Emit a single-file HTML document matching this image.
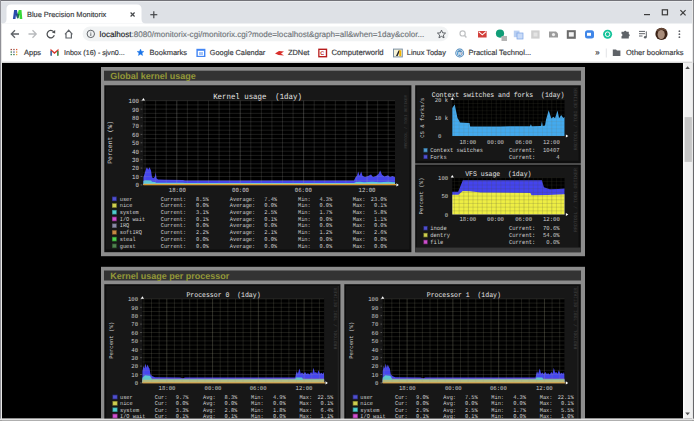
<!DOCTYPE html><html><head><meta charset="utf-8"><title>Blue Precision Monitorix</title>
<style>html,body{margin:0;padding:0;width:694px;height:421px;overflow:hidden;background:#000}svg{display:block}text{text-rendering:geometricPrecision}</style></head><body>
<svg width="694" height="421" viewBox="0 0 694 421">
<rect x="0.00" y="0.00" width="694.00" height="63.00" fill="#ffffff" />
<rect x="0.00" y="0.00" width="694.00" height="23.50" fill="#dee1e6" />
<rect x="0.00" y="0.00" width="694.00" height="1.00" fill="#727278" />
<rect x="0.00" y="1.00" width="694.00" height="0.90" fill="#eaecef" />
<path d="M2,23.5 Q6.5,23.5 6.5,19 L6.5,9 Q6.5,4.5 11,4.5 L137,4.5 Q141.5,4.5 141.5,9 L141.5,19 Q141.5,23.5 146,23.5 Z" fill="#ffffff"/>
<defs><clipPath id="fvl"><rect x="0" y="0" width="17.7" height="30"/></clipPath><clipPath id="fvr"><rect x="17.7" y="0" width="30" height="30"/></clipPath></defs>
<path d="M12.9,18.9 L14.1,10.1 L16.9,10.1 L17.8,13.6 L18.7,10.1 L21.5,10.1 L22.3,18.9 L19.7,18.9 L19.4,14.6 L18.4,18.3 L17.1,18.3 L16.0,14.6 L15.5,18.9 Z" fill="#2a4cae" clip-path="url(#fvl)"/>
<path d="M12.9,18.9 L14.1,10.1 L16.9,10.1 L17.8,13.6 L18.7,10.1 L21.5,10.1 L22.3,18.9 L19.7,18.9 L19.4,14.6 L18.4,18.3 L17.1,18.3 L16.0,14.6 L15.5,18.9 Z" fill="#38d838" clip-path="url(#fvr)"/>
<polygon points="16.2,14.6 17.7,13.4 17.7,18.3 17.1,18.3" fill="#1e3a80"/>
<polygon points="17.7,13.4 19.3,14.6 18.4,18.3 17.7,18.3" fill="#1f7a3a"/>
<text x="27.00" y="17.10" font-size="7.4" fill="#3c4043" stroke="#3c4043" stroke-width="0.18" text-anchor="start" style="font-family:'Liberation Sans',sans-serif;font-weight:normal;white-space:pre" >Blue Precision Monitorix</text>
<line x1="130.60" y1="12.50" x2="134.60" y2="16.50" stroke="#45474a" stroke-width="1.1" />
<line x1="134.60" y1="12.50" x2="130.60" y2="16.50" stroke="#45474a" stroke-width="1.1" />
<line x1="153.80" y1="11.20" x2="153.80" y2="18.20" stroke="#45474a" stroke-width="1.2" />
<line x1="150.30" y1="14.70" x2="157.30" y2="14.70" stroke="#45474a" stroke-width="1.2" />
<line x1="644.00" y1="14.60" x2="650.00" y2="14.60" stroke="#3c3c3c" stroke-width="1.2" />
<rect x="662.3" y="9.8" width="5.2" height="5" fill="none" stroke="#3c3c3c" stroke-width="1.2"/>
<line x1="680.40" y1="10.20" x2="685.60" y2="15.40" stroke="#3c3c3c" stroke-width="1.2" />
<line x1="685.60" y1="10.20" x2="680.40" y2="15.40" stroke="#3c3c3c" stroke-width="1.2" />
<path d="M19,34 L11.5,34 M15,30.3 L11.3,34 L15,37.7" fill="none" stroke="#5f6368" stroke-width="1.3"/>
<path d="M28.5,34 L36,34 M32.5,30.3 L36.2,34 L32.5,37.7" fill="none" stroke="#b8babd" stroke-width="1.3"/>
<path d="M53.6,31.7 A3.7,3.7 0 1 0 54.3,35.3" fill="none" stroke="#4a4d50" stroke-width="1.25"/>
<path d="M51.9,32.6 L55.2,29.9 L55.2,33.4 Z" fill="#4a4d50"/>
<path d="M65,34.3 L68.7,30.2 L72.4,34.3 M66,33.4 L66,38 L71.4,38 L71.4,33.4" fill="none" stroke="#5f6368" stroke-width="1.2"/>
<rect x="82.6" y="26.6" width="366" height="14.6" rx="7.3" fill="#f1f3f4"/>
<circle cx="90.8" cy="33.9" r="3.7" fill="none" stroke="#5f6368" stroke-width="1"/>
<line x1="90.80" y1="33.20" x2="90.80" y2="36.00" stroke="#5f6368" stroke-width="0.9" />
<line x1="90.80" y1="31.80" x2="90.80" y2="32.50" stroke="#5f6368" stroke-width="0.9" />
<text x="99.6" y="36.7" font-size="8.1" stroke-width="0.15" style="font-family:'Liberation Sans',sans-serif"><tspan fill="#202124" stroke="#202124">localhost</tspan><tspan fill="#70757a" stroke="#70757a">:8080/monitorix-cgi/monitorix.cgi?mode=localhost&amp;graph=all&amp;when=1day&amp;color...</tspan></text>
<polygon points="441.50,30.10 442.64,32.83 445.59,33.07 443.34,35.00 444.03,37.88 441.50,36.34 438.97,37.88 439.66,35.00 437.41,33.07 440.36,32.83" fill="none" stroke="#5f6368" stroke-width="1"/>
<circle cx="462.6" cy="33.4" r="2.6" fill="none" stroke="#c0c2c4" stroke-width="1.2"/>
<line x1="464.40" y1="35.30" x2="466.40" y2="37.40" stroke="#c0c2c4" stroke-width="1.4" />
<rect x="478.00" y="31.00" width="8.60" height="6.50" fill="#d23f3a" />
<path d="M478.6,31.6 L482.3,34.8 L486,31.6" fill="none" stroke="#fff" stroke-width="1.1"/>
<circle cx="500" cy="33.6" r="4.1" fill="#109d77"/>
<rect x="501.50" y="36.00" width="5.50" height="5.00" fill="#b4b4b4" />
<rect x="513.80" y="30.60" width="5.70" height="6.60" fill="#b8cff2" />
<rect x="517.00" y="33.00" width="6.00" height="6.00" fill="#c9dbf7" />
<rect x="517" y="33" width="6" height="6" fill="none" stroke="#7aa3e6" stroke-width="0.7"/>
<rect x="531.20" y="30.40" width="8.40" height="8.20" fill="#cfcfcf" />
<rect x="533.50" y="32.50" width="4.00" height="4.00" fill="#e4e4e4" />
<path d="M549,31.5 L556,31.5 L558,33.5 L558,37.5 L549,37.5 Z" fill="#9b9b9b"/>
<circle cx="553.5" cy="34.6" r="1.6" fill="#eee"/>
<rect x="566.80" y="30.20" width="9.00" height="8.60" fill="#6a6a6a" />
<rect x="568.80" y="32.20" width="5.00" height="4.40" fill="#f3f3f3" />
<rect x="585" y="30.2" width="9" height="8.2" rx="2.5" fill="#3f86e8"/>
<rect x="587.00" y="32.80" width="4.00" height="3.00" fill="#fff" />
<circle cx="607.6" cy="34.2" r="4.5" fill="#15c39a"/>
<circle cx="607.6" cy="34.2" r="2.3" fill="none" stroke="#fff" stroke-width="1"/>
<path d="M621.5,31.8 L624,31.8 A1.3,1.3 0 0 1 626.5,31.8 L628.8,31.8 L628.8,34 A1.3,1.3 0 0 1 628.8,36.5 L628.8,38.4 L621.5,38.4 L621.5,36.3 A1.3,1.3 0 0 0 621.5,33.8 Z" fill="#5f6368"/>
<line x1="639.00" y1="31.40" x2="645.00" y2="31.40" stroke="#5f6368" stroke-width="1" />
<line x1="639.00" y1="33.70" x2="645.00" y2="33.70" stroke="#5f6368" stroke-width="1" />
<line x1="639.00" y1="36.00" x2="642.50" y2="36.00" stroke="#5f6368" stroke-width="1" />
<line x1="646.30" y1="31.40" x2="646.30" y2="37.20" stroke="#5f6368" stroke-width="1" />
<circle cx="645.2" cy="37.3" r="1.3" fill="#5f6368"/>
<circle cx="661.5" cy="33.9" r="6.1" fill="#3a2216"/>
<ellipse cx="661.2" cy="34.6" rx="3.6" ry="4.6" fill="#a88c7a"/>
<path d="M656.5,32 Q658,27.8 661.5,27.9 Q665,28 666.5,31 Q663.5,29.6 661,29.8 Q658.5,30 656.5,32 Z" fill="#6a4a38"/>
<circle cx="679.4" cy="31.2" r="0.9" fill="#5f6368"/>
<circle cx="679.4" cy="34.2" r="0.9" fill="#5f6368"/>
<circle cx="679.4" cy="37.2" r="0.9" fill="#5f6368"/>
<rect x="10.60" y="48.90" width="1.30" height="1.30" fill="#9a3a30" />
<rect x="13.30" y="48.90" width="1.30" height="1.30" fill="#8a4a40" />
<rect x="16.00" y="48.90" width="1.30" height="1.30" fill="#e05a3a" />
<rect x="10.60" y="51.40" width="1.30" height="1.30" fill="#2a6a3a" />
<rect x="13.30" y="51.40" width="1.30" height="1.30" fill="#3a4a8a" />
<rect x="16.00" y="51.40" width="1.30" height="1.30" fill="#e0902a" />
<rect x="10.60" y="53.90" width="1.30" height="1.30" fill="#2a7a4a" />
<rect x="13.30" y="53.90" width="1.30" height="1.30" fill="#2a6a3a" />
<rect x="16.00" y="53.90" width="1.30" height="1.30" fill="#e8a030" />
<text x="24.00" y="55.40" font-size="7.5" fill="#3c4043" stroke="#3c4043" stroke-width="0.18" text-anchor="start" style="font-family:'Liberation Sans',sans-serif;font-weight:normal;white-space:pre" >Apps</text>
<path d="M51.2,55.6 L51.2,50.2 L54.5,53 L57.8,50.2 L57.8,55.6" fill="none" stroke="#d8382c" stroke-width="1.4"/>
<line x1="51.20" y1="51.00" x2="51.20" y2="55.80" stroke="#2b7bb9" stroke-width="1.4" />
<line x1="57.80" y1="51.00" x2="57.80" y2="55.80" stroke="#2e9d5a" stroke-width="1.4" />
<text x="64.00" y="55.40" font-size="7.1" fill="#3c4043" stroke="#3c4043" stroke-width="0.18" text-anchor="start" style="font-family:'Liberation Sans',sans-serif;font-weight:normal;white-space:pre" >Inbox (16) - sjvn0...</text>
<polygon points="140.50,49.00 141.45,51.29 143.92,51.49 142.04,53.10 142.62,55.51 140.50,54.22 138.38,55.51 138.96,53.10 137.08,51.49 139.55,51.29" fill="#1a73e8" stroke="#1a73e8" stroke-width="0.4"/>
<text x="149.60" y="55.40" font-size="7.5" fill="#3c4043" stroke="#3c4043" stroke-width="0.18" text-anchor="start" style="font-family:'Liberation Sans',sans-serif;font-weight:normal;white-space:pre" >Bookmarks</text>
<rect x="196.40" y="48.80" width="9.00" height="8.20" fill="#4285f4" />
<rect x="197.80" y="50.80" width="6.20" height="5.00" fill="#ffffff" />
<rect x="199.00" y="52.00" width="4.00" height="3.00" fill="#a6c5f7" />
<text x="209.80" y="55.40" font-size="7.35" fill="#3c4043" stroke="#3c4043" stroke-width="0.18" text-anchor="start" style="font-family:'Liberation Sans',sans-serif;font-weight:normal;white-space:pre" >Google Calendar</text>
<path d="M275,53.5 L279,51 L284,51.5 L281,53.5 L284,55.5 L278.5,55 Z" fill="#d9302c"/>
<text x="288.00" y="55.40" font-size="7.4" fill="#3c4043" stroke="#3c4043" stroke-width="0.18" text-anchor="start" style="font-family:'Liberation Sans',sans-serif;font-weight:normal;white-space:pre" >ZDNet</text>
<rect x="318.20" y="48.60" width="9.00" height="8.80" fill="#b71c1c" />
<rect x="319.50" y="50.00" width="6.30" height="6.00" fill="#ffffff" />
<text x="320.20" y="55.20" font-size="5.5" fill="#b71c1c" text-anchor="start" style="font-family:'Liberation Sans',sans-serif;font-weight:bold;white-space:pre" >C</text>
<text x="331.50" y="55.40" font-size="7.7" fill="#3c4043" stroke="#3c4043" stroke-width="0.18" text-anchor="start" style="font-family:'Liberation Sans',sans-serif;font-weight:normal;white-space:pre" >Computerworld</text>
<rect x="393.00" y="48.60" width="9.80" height="8.80" fill="#7a8fa3" />
<rect x="394.00" y="49.60" width="7.80" height="6.80" fill="#f7f3d8" />
<path d="M398.5,50.5 L396,56 L397.6,56 L400,50.5 Z" fill="#222"/>
<rect x="399.30" y="50.30" width="1.90" height="5.90" fill="#f2b300" />
<text x="406.80" y="55.40" font-size="7.35" fill="#3c4043" stroke="#3c4043" stroke-width="0.18" text-anchor="start" style="font-family:'Liberation Sans',sans-serif;font-weight:normal;white-space:pre" >Linux Today</text>
<circle cx="459.7" cy="53" r="4.4" fill="#3f7fb6"/>
<circle cx="459.7" cy="53" r="3.3" fill="none" stroke="#fff" stroke-width="0.7"/>
<text x="457.60" y="55.20" font-size="4.6" fill="#fff" text-anchor="start" style="font-family:'Liberation Sans',sans-serif;font-weight:bold;white-space:pre" >W</text>
<text x="468.40" y="55.40" font-size="7.5" fill="#3c4043" stroke="#3c4043" stroke-width="0.18" text-anchor="start" style="font-family:'Liberation Sans',sans-serif;font-weight:normal;white-space:pre" >Practical Technol...</text>
<text x="595.20" y="55.30" font-size="8" fill="#3c4043" stroke="#3c4043" stroke-width="0.18" text-anchor="start" style="font-family:'Liberation Sans',sans-serif;font-weight:normal;white-space:pre" >»</text>
<line x1="606.30" y1="48.50" x2="606.30" y2="57.50" stroke="#dadce0" stroke-width="0.8" />
<path d="M612.8,49.4 L616,49.4 L617,50.6 L620.4,50.6 L620.4,56 L612.8,56 Z" fill="#5f6368"/>
<text x="626.00" y="55.40" font-size="7.5" fill="#3c4043" stroke="#3c4043" stroke-width="0.18" text-anchor="start" style="font-family:'Liberation Sans',sans-serif;font-weight:normal;white-space:pre" >Other bookmarks</text>
<rect x="0.00" y="61.60" width="694.00" height="1.40" fill="#d6d6d6" />
<rect x="2.00" y="63.00" width="681.00" height="355.00" fill="#000000" />
<rect x="0.00" y="0.00" width="1.00" height="421.00" fill="#909096" />
<rect x="1.00" y="23.50" width="1.00" height="397.50" fill="#e6e6e6" />
<rect x="692.00" y="0.00" width="1.20" height="421.00" fill="#e8e8e8" />
<rect x="693.20" y="0.00" width="0.80" height="421.00" fill="#76767a" />
<rect x="0.00" y="418.60" width="694.00" height="2.40" fill="#e2e2e2" />
<rect x="0.00" y="420.30" width="694.00" height="0.70" fill="#9a9a9a" />
<rect x="683.00" y="63.00" width="9.00" height="355.60" fill="#f0f0f0" />
<rect x="683.00" y="63.00" width="1.50" height="355.60" fill="#fafafa" />
<rect x="684.6" y="117.1" width="7.3" height="44.8" fill="#c6c6c6"/>
<path d="M685.3,69 L687.6,66.3 L689.9,69 Z" fill="#505050"/>
<path d="M685.3,412.6 L687.6,415.3 L689.9,412.6 Z" fill="#505050"/>
<rect x="101.00" y="67.00" width="484.00" height="189.20" fill="#8c8c8c" />
<rect x="104.00" y="70.70" width="477.00" height="10.00" fill="#333333" />
<text x="110.20" y="79.20" font-size="9" fill="#939838" text-anchor="start" style="font-family:'Liberation Sans',sans-serif;font-weight:bold;white-space:pre" >Global kernel usage</text>
<rect x="101.00" y="266.80" width="484.00" height="163.20" fill="#8c8c8c" />
<rect x="104.00" y="270.50" width="477.00" height="10.00" fill="#333333" />
<text x="110.20" y="279.00" font-size="9" fill="#939838" text-anchor="start" style="font-family:'Liberation Sans',sans-serif;font-weight:bold;white-space:pre" >Kernel usage per processor</text>
<rect x="104.30" y="85.30" width="307.10" height="166.90" fill="#0d0d0d" />
<rect x="105.80" y="86.50" width="303.70" height="163.00" fill="#171717" />
<rect x="415.20" y="85.30" width="165.60" height="77.70" fill="#0d0d0d" />
<rect x="416.60" y="86.50" width="162.00" height="74.30" fill="#171717" />
<rect x="415.20" y="163.00" width="165.60" height="2.20" fill="#4a4a4a" />
<rect x="415.20" y="165.00" width="165.60" height="87.20" fill="#0d0d0d" />
<rect x="416.60" y="166.30" width="162.00" height="81.20" fill="#171717" />
<rect x="415.20" y="247.50" width="165.60" height="4.70" fill="#383838" />
<rect x="104.30" y="284.20" width="236.10" height="145.80" fill="#0d0d0d" />
<rect x="106.20" y="286.00" width="232.60" height="144.00" fill="#171717" />
<rect x="344.30" y="284.20" width="236.50" height="145.80" fill="#0d0d0d" />
<rect x="346.00" y="286.00" width="232.60" height="144.00" fill="#171717" />
<rect x="337.60" y="286.00" width="1.60" height="144.00" fill="#222222" />
<rect x="577.00" y="286.00" width="1.60" height="144.00" fill="#222222" />
<rect x="143.40" y="100.70" width="251.60" height="84.20" fill="#000000" />
<text x="0" y="0" transform="translate(257.50,99.10) scale(1,1.1)" font-size="7.4" fill="#e6e6e6" text-anchor="middle" style="font-family:'Liberation Mono',monospace;font-weight:normal;white-space:pre" >Kernel usage  (1day)</text>
<text x="0" y="0" font-size="6.5" fill="#d0d0d0" text-anchor="middle" style="font-family:'Liberation Mono',monospace;white-space:pre" transform="translate(110.80,142.40) rotate(-90)" dominant-baseline="central">Percent (%)</text>
<text x="0" y="0" transform="translate(139.00,103.10) scale(1,1.1)" font-size="5.8" fill="#d0d0d0" text-anchor="end" style="font-family:'Liberation Mono',monospace;font-weight:normal;white-space:pre" >100</text>
<line x1="140.60" y1="100.70" x2="142.40" y2="100.70" stroke="#6a6a6a" stroke-width="0.8" />
<text x="0" y="0" transform="translate(139.00,111.52) scale(1,1.1)" font-size="5.8" fill="#d0d0d0" text-anchor="end" style="font-family:'Liberation Mono',monospace;font-weight:normal;white-space:pre" >90</text>
<line x1="140.60" y1="109.12" x2="142.40" y2="109.12" stroke="#6a6a6a" stroke-width="0.8" />
<text x="0" y="0" transform="translate(139.00,119.94) scale(1,1.1)" font-size="5.8" fill="#d0d0d0" text-anchor="end" style="font-family:'Liberation Mono',monospace;font-weight:normal;white-space:pre" >80</text>
<line x1="140.60" y1="117.54" x2="142.40" y2="117.54" stroke="#6a6a6a" stroke-width="0.8" />
<text x="0" y="0" transform="translate(139.00,128.36) scale(1,1.1)" font-size="5.8" fill="#d0d0d0" text-anchor="end" style="font-family:'Liberation Mono',monospace;font-weight:normal;white-space:pre" >70</text>
<line x1="140.60" y1="125.96" x2="142.40" y2="125.96" stroke="#6a6a6a" stroke-width="0.8" />
<text x="0" y="0" transform="translate(139.00,136.78) scale(1,1.1)" font-size="5.8" fill="#d0d0d0" text-anchor="end" style="font-family:'Liberation Mono',monospace;font-weight:normal;white-space:pre" >60</text>
<line x1="140.60" y1="134.38" x2="142.40" y2="134.38" stroke="#6a6a6a" stroke-width="0.8" />
<text x="0" y="0" transform="translate(139.00,145.20) scale(1,1.1)" font-size="5.8" fill="#d0d0d0" text-anchor="end" style="font-family:'Liberation Mono',monospace;font-weight:normal;white-space:pre" >50</text>
<line x1="140.60" y1="142.80" x2="142.40" y2="142.80" stroke="#6a6a6a" stroke-width="0.8" />
<text x="0" y="0" transform="translate(139.00,153.62) scale(1,1.1)" font-size="5.8" fill="#d0d0d0" text-anchor="end" style="font-family:'Liberation Mono',monospace;font-weight:normal;white-space:pre" >40</text>
<line x1="140.60" y1="151.22" x2="142.40" y2="151.22" stroke="#6a6a6a" stroke-width="0.8" />
<text x="0" y="0" transform="translate(139.00,162.04) scale(1,1.1)" font-size="5.8" fill="#d0d0d0" text-anchor="end" style="font-family:'Liberation Mono',monospace;font-weight:normal;white-space:pre" >30</text>
<line x1="140.60" y1="159.64" x2="142.40" y2="159.64" stroke="#6a6a6a" stroke-width="0.8" />
<text x="0" y="0" transform="translate(139.00,170.46) scale(1,1.1)" font-size="5.8" fill="#d0d0d0" text-anchor="end" style="font-family:'Liberation Mono',monospace;font-weight:normal;white-space:pre" >20</text>
<line x1="140.60" y1="168.06" x2="142.40" y2="168.06" stroke="#6a6a6a" stroke-width="0.8" />
<text x="0" y="0" transform="translate(139.00,178.88) scale(1,1.1)" font-size="5.8" fill="#d0d0d0" text-anchor="end" style="font-family:'Liberation Mono',monospace;font-weight:normal;white-space:pre" >10</text>
<line x1="140.60" y1="176.48" x2="142.40" y2="176.48" stroke="#6a6a6a" stroke-width="0.8" />
<text x="0" y="0" transform="translate(139.00,187.30) scale(1,1.1)" font-size="5.8" fill="#d0d0d0" text-anchor="end" style="font-family:'Liberation Mono',monospace;font-weight:normal;white-space:pre" >0</text>
<line x1="140.60" y1="184.90" x2="142.40" y2="184.90" stroke="#6a6a6a" stroke-width="0.8" />
<polygon points="143.40,177.32 144.50,173.95 146.00,168.90 147.00,167.22 148.20,169.74 149.50,167.22 151.00,170.59 152.00,177.32 153.50,178.16 155.00,176.48 155.70,172.27 156.50,178.16 158.00,179.43 165.00,179.85 183.00,180.02 185.00,180.52 354.00,180.52 355.50,177.32 357.00,175.64 358.20,171.43 359.50,175.64 361.20,171.43 362.50,175.64 365.00,176.90 368.00,176.06 371.00,174.38 373.00,176.90 376.00,176.06 378.50,173.95 380.20,170.59 382.00,174.80 384.50,176.48 388.00,175.13 390.00,176.90 392.50,176.06 395.00,177.32 395.00,184.90 143.40,184.90" fill="#4646ee" />
<polygon points="143.40,181.11 145.00,180.27 151.00,180.52 152.00,181.87 155.00,182.04 156.00,182.71 183.00,182.71 185.00,182.88 354.00,182.88 356.00,182.04 360.00,181.70 364.00,182.37 372.00,181.87 380.00,182.21 388.00,181.87 395.00,182.21 395.00,184.90 143.40,184.90" fill="#5cc8d8" />
<polygon points="143.40,183.55 395.00,183.55 395.00,184.90 143.40,184.90" fill="#a8c8a8" />
<line x1="143.40" y1="100.70" x2="395.00" y2="100.70" stroke="rgba(165,165,160,0.2)" stroke-width="0.9" />
<line x1="143.40" y1="104.91" x2="395.00" y2="104.91" stroke="rgba(165,165,160,0.2)" stroke-width="0.9" />
<line x1="143.40" y1="109.12" x2="395.00" y2="109.12" stroke="rgba(165,165,160,0.2)" stroke-width="0.9" />
<line x1="143.40" y1="113.33" x2="395.00" y2="113.33" stroke="rgba(165,165,160,0.2)" stroke-width="0.9" />
<line x1="143.40" y1="117.54" x2="395.00" y2="117.54" stroke="rgba(165,165,160,0.2)" stroke-width="0.9" />
<line x1="143.40" y1="121.75" x2="395.00" y2="121.75" stroke="rgba(165,165,160,0.2)" stroke-width="0.9" />
<line x1="143.40" y1="125.96" x2="395.00" y2="125.96" stroke="rgba(165,165,160,0.2)" stroke-width="0.9" />
<line x1="143.40" y1="130.17" x2="395.00" y2="130.17" stroke="rgba(165,165,160,0.2)" stroke-width="0.9" />
<line x1="143.40" y1="134.38" x2="395.00" y2="134.38" stroke="rgba(165,165,160,0.2)" stroke-width="0.9" />
<line x1="143.40" y1="138.59" x2="395.00" y2="138.59" stroke="rgba(165,165,160,0.2)" stroke-width="0.9" />
<line x1="143.40" y1="142.80" x2="395.00" y2="142.80" stroke="rgba(165,165,160,0.2)" stroke-width="0.9" />
<line x1="143.40" y1="147.01" x2="395.00" y2="147.01" stroke="rgba(165,165,160,0.2)" stroke-width="0.9" />
<line x1="143.40" y1="151.22" x2="395.00" y2="151.22" stroke="rgba(165,165,160,0.2)" stroke-width="0.9" />
<line x1="143.40" y1="155.43" x2="395.00" y2="155.43" stroke="rgba(165,165,160,0.2)" stroke-width="0.9" />
<line x1="143.40" y1="159.64" x2="395.00" y2="159.64" stroke="rgba(165,165,160,0.2)" stroke-width="0.9" />
<line x1="143.40" y1="163.85" x2="395.00" y2="163.85" stroke="rgba(165,165,160,0.2)" stroke-width="0.9" />
<line x1="143.40" y1="168.06" x2="395.00" y2="168.06" stroke="rgba(165,165,160,0.2)" stroke-width="0.9" />
<line x1="143.40" y1="172.27" x2="395.00" y2="172.27" stroke="rgba(165,165,160,0.2)" stroke-width="0.9" />
<line x1="143.40" y1="176.48" x2="395.00" y2="176.48" stroke="rgba(165,165,160,0.2)" stroke-width="0.9" />
<line x1="143.40" y1="180.69" x2="395.00" y2="180.69" stroke="rgba(165,165,160,0.2)" stroke-width="0.9" />
<line x1="143.40" y1="184.90" x2="395.00" y2="184.90" stroke="rgba(165,165,160,0.2)" stroke-width="0.9" />
<line x1="145.09" y1="100.70" x2="145.09" y2="184.90" stroke="rgba(165,165,160,0.2)" stroke-width="0.9" />
<line x1="155.66" y1="100.70" x2="155.66" y2="184.90" stroke="rgba(165,165,160,0.2)" stroke-width="0.9" />
<line x1="166.23" y1="100.70" x2="166.23" y2="184.90" stroke="rgba(165,165,160,0.2)" stroke-width="0.9" />
<line x1="176.80" y1="100.70" x2="176.80" y2="184.90" stroke="rgba(165,165,160,0.34)" stroke-width="0.9" />
<line x1="187.37" y1="100.70" x2="187.37" y2="184.90" stroke="rgba(165,165,160,0.2)" stroke-width="0.9" />
<line x1="197.94" y1="100.70" x2="197.94" y2="184.90" stroke="rgba(165,165,160,0.2)" stroke-width="0.9" />
<line x1="208.51" y1="100.70" x2="208.51" y2="184.90" stroke="rgba(165,165,160,0.2)" stroke-width="0.9" />
<line x1="219.08" y1="100.70" x2="219.08" y2="184.90" stroke="rgba(165,165,160,0.2)" stroke-width="0.9" />
<line x1="229.65" y1="100.70" x2="229.65" y2="184.90" stroke="rgba(165,165,160,0.2)" stroke-width="0.9" />
<line x1="240.22" y1="100.70" x2="240.22" y2="184.90" stroke="rgba(165,165,160,0.34)" stroke-width="0.9" />
<line x1="250.79" y1="100.70" x2="250.79" y2="184.90" stroke="rgba(165,165,160,0.2)" stroke-width="0.9" />
<line x1="261.36" y1="100.70" x2="261.36" y2="184.90" stroke="rgba(165,165,160,0.2)" stroke-width="0.9" />
<line x1="271.93" y1="100.70" x2="271.93" y2="184.90" stroke="rgba(165,165,160,0.2)" stroke-width="0.9" />
<line x1="282.50" y1="100.70" x2="282.50" y2="184.90" stroke="rgba(165,165,160,0.2)" stroke-width="0.9" />
<line x1="293.07" y1="100.70" x2="293.07" y2="184.90" stroke="rgba(165,165,160,0.2)" stroke-width="0.9" />
<line x1="303.64" y1="100.70" x2="303.64" y2="184.90" stroke="rgba(165,165,160,0.34)" stroke-width="0.9" />
<line x1="314.21" y1="100.70" x2="314.21" y2="184.90" stroke="rgba(165,165,160,0.2)" stroke-width="0.9" />
<line x1="324.78" y1="100.70" x2="324.78" y2="184.90" stroke="rgba(165,165,160,0.2)" stroke-width="0.9" />
<line x1="335.35" y1="100.70" x2="335.35" y2="184.90" stroke="rgba(165,165,160,0.2)" stroke-width="0.9" />
<line x1="345.92" y1="100.70" x2="345.92" y2="184.90" stroke="rgba(165,165,160,0.2)" stroke-width="0.9" />
<line x1="356.49" y1="100.70" x2="356.49" y2="184.90" stroke="rgba(165,165,160,0.2)" stroke-width="0.9" />
<line x1="367.06" y1="100.70" x2="367.06" y2="184.90" stroke="rgba(165,165,160,0.34)" stroke-width="0.9" />
<line x1="377.63" y1="100.70" x2="377.63" y2="184.90" stroke="rgba(165,165,160,0.2)" stroke-width="0.9" />
<line x1="388.20" y1="100.70" x2="388.20" y2="184.90" stroke="rgba(165,165,160,0.2)" stroke-width="0.9" />
<line x1="143.40" y1="184.60" x2="396.00" y2="184.60" stroke="#dc9c34" stroke-width="1.3" />
<path d="M141.80,100.50 L143.40,98.10 L145.00,100.50 Z" fill="#ffffff"/>
<path d="M396.40,183.30 L398.80,184.90 L396.40,186.50 Z" fill="#ffffff"/>
<text x="0" y="0" transform="translate(177.30,192.10) scale(1,1.1)" font-size="5.7" fill="#d0d0d0" text-anchor="middle" style="font-family:'Liberation Mono',monospace;font-weight:normal;white-space:pre" >18:00</text>
<text x="0" y="0" transform="translate(240.50,192.10) scale(1,1.1)" font-size="5.7" fill="#d0d0d0" text-anchor="middle" style="font-family:'Liberation Mono',monospace;font-weight:normal;white-space:pre" >00:00</text>
<text x="0" y="0" transform="translate(303.30,192.10) scale(1,1.1)" font-size="5.7" fill="#d0d0d0" text-anchor="middle" style="font-family:'Liberation Mono',monospace;font-weight:normal;white-space:pre" >06:00</text>
<text x="0" y="0" transform="translate(367.00,192.10) scale(1,1.1)" font-size="5.7" fill="#d0d0d0" text-anchor="middle" style="font-family:'Liberation Mono',monospace;font-weight:normal;white-space:pre" >12:00</text>
<text x="0" y="0" font-size="4.0681818181818175" fill="#3e3e3e" text-anchor="middle" style="font-family:'Liberation Mono',monospace;white-space:pre" transform="translate(406.50,121.85) rotate(-90)" dominant-baseline="central">RRDTOOL / TOBI OETIKER</text>
<rect x="112.00" y="196.50" width="4.80" height="4.60" fill="#2c2c81" />
<rect x="112.70" y="197.20" width="3.40" height="3.20" fill="#5050ce" />
<text x="0" y="0" transform="translate(119.70,200.60) scale(1,1.1)" font-size="5.3" fill="#d0d0d0" text-anchor="start" style="font-family:'Liberation Mono',monospace;font-weight:normal;white-space:pre" >user</text>
<text x="0" y="0" transform="translate(160.70,200.60) scale(1,1.1)" font-size="5.3" fill="#d0d0d0" text-anchor="start" style="font-family:'Liberation Mono',monospace;font-weight:normal;white-space:pre" >Current:</text>
<text x="0" y="0" transform="translate(208.80,200.60) scale(1,1.1)" font-size="5.3" fill="#d0d0d0" text-anchor="end" style="font-family:'Liberation Mono',monospace;font-weight:normal;white-space:pre" >8.5%</text>
<text x="0" y="0" transform="translate(229.80,200.60) scale(1,1.1)" font-size="5.3" fill="#d0d0d0" text-anchor="start" style="font-family:'Liberation Mono',monospace;font-weight:normal;white-space:pre" >Average:</text>
<text x="0" y="0" transform="translate(277.00,200.60) scale(1,1.1)" font-size="5.3" fill="#d0d0d0" text-anchor="end" style="font-family:'Liberation Mono',monospace;font-weight:normal;white-space:pre" >7.4%</text>
<text x="0" y="0" transform="translate(298.00,200.60) scale(1,1.1)" font-size="5.3" fill="#d0d0d0" text-anchor="start" style="font-family:'Liberation Mono',monospace;font-weight:normal;white-space:pre" >Min:</text>
<text x="0" y="0" transform="translate(332.10,200.60) scale(1,1.1)" font-size="5.3" fill="#d0d0d0" text-anchor="end" style="font-family:'Liberation Mono',monospace;font-weight:normal;white-space:pre" >4.3%</text>
<text x="0" y="0" transform="translate(352.70,200.60) scale(1,1.1)" font-size="5.3" fill="#d0d0d0" text-anchor="start" style="font-family:'Liberation Mono',monospace;font-weight:normal;white-space:pre" >Max:</text>
<text x="0" y="0" transform="translate(386.70,200.60) scale(1,1.1)" font-size="5.3" fill="#d0d0d0" text-anchor="end" style="font-family:'Liberation Mono',monospace;font-weight:normal;white-space:pre" >23.0%</text>
<rect x="112.00" y="203.22" width="4.80" height="4.60" fill="#81812c" />
<rect x="112.70" y="203.92" width="3.40" height="3.20" fill="#cece50" />
<text x="0" y="0" transform="translate(119.70,207.32) scale(1,1.1)" font-size="5.3" fill="#d0d0d0" text-anchor="start" style="font-family:'Liberation Mono',monospace;font-weight:normal;white-space:pre" >nice</text>
<text x="0" y="0" transform="translate(160.70,207.32) scale(1,1.1)" font-size="5.3" fill="#d0d0d0" text-anchor="start" style="font-family:'Liberation Mono',monospace;font-weight:normal;white-space:pre" >Current:</text>
<text x="0" y="0" transform="translate(208.80,207.32) scale(1,1.1)" font-size="5.3" fill="#d0d0d0" text-anchor="end" style="font-family:'Liberation Mono',monospace;font-weight:normal;white-space:pre" >0.0%</text>
<text x="0" y="0" transform="translate(229.80,207.32) scale(1,1.1)" font-size="5.3" fill="#d0d0d0" text-anchor="start" style="font-family:'Liberation Mono',monospace;font-weight:normal;white-space:pre" >Average:</text>
<text x="0" y="0" transform="translate(277.00,207.32) scale(1,1.1)" font-size="5.3" fill="#d0d0d0" text-anchor="end" style="font-family:'Liberation Mono',monospace;font-weight:normal;white-space:pre" >0.0%</text>
<text x="0" y="0" transform="translate(298.00,207.32) scale(1,1.1)" font-size="5.3" fill="#d0d0d0" text-anchor="start" style="font-family:'Liberation Mono',monospace;font-weight:normal;white-space:pre" >Min:</text>
<text x="0" y="0" transform="translate(332.10,207.32) scale(1,1.1)" font-size="5.3" fill="#d0d0d0" text-anchor="end" style="font-family:'Liberation Mono',monospace;font-weight:normal;white-space:pre" >0.0%</text>
<text x="0" y="0" transform="translate(352.70,207.32) scale(1,1.1)" font-size="5.3" fill="#d0d0d0" text-anchor="start" style="font-family:'Liberation Mono',monospace;font-weight:normal;white-space:pre" >Max:</text>
<text x="0" y="0" transform="translate(386.70,207.32) scale(1,1.1)" font-size="5.3" fill="#d0d0d0" text-anchor="end" style="font-family:'Liberation Mono',monospace;font-weight:normal;white-space:pre" >0.1%</text>
<rect x="112.00" y="209.94" width="4.80" height="4.60" fill="#2c8181" />
<rect x="112.70" y="210.64" width="3.40" height="3.20" fill="#50cece" />
<text x="0" y="0" transform="translate(119.70,214.04) scale(1,1.1)" font-size="5.3" fill="#d0d0d0" text-anchor="start" style="font-family:'Liberation Mono',monospace;font-weight:normal;white-space:pre" >system</text>
<text x="0" y="0" transform="translate(160.70,214.04) scale(1,1.1)" font-size="5.3" fill="#d0d0d0" text-anchor="start" style="font-family:'Liberation Mono',monospace;font-weight:normal;white-space:pre" >Current:</text>
<text x="0" y="0" transform="translate(208.80,214.04) scale(1,1.1)" font-size="5.3" fill="#d0d0d0" text-anchor="end" style="font-family:'Liberation Mono',monospace;font-weight:normal;white-space:pre" >3.1%</text>
<text x="0" y="0" transform="translate(229.80,214.04) scale(1,1.1)" font-size="5.3" fill="#d0d0d0" text-anchor="start" style="font-family:'Liberation Mono',monospace;font-weight:normal;white-space:pre" >Average:</text>
<text x="0" y="0" transform="translate(277.00,214.04) scale(1,1.1)" font-size="5.3" fill="#d0d0d0" text-anchor="end" style="font-family:'Liberation Mono',monospace;font-weight:normal;white-space:pre" >2.5%</text>
<text x="0" y="0" transform="translate(298.00,214.04) scale(1,1.1)" font-size="5.3" fill="#d0d0d0" text-anchor="start" style="font-family:'Liberation Mono',monospace;font-weight:normal;white-space:pre" >Min:</text>
<text x="0" y="0" transform="translate(332.10,214.04) scale(1,1.1)" font-size="5.3" fill="#d0d0d0" text-anchor="end" style="font-family:'Liberation Mono',monospace;font-weight:normal;white-space:pre" >1.7%</text>
<text x="0" y="0" transform="translate(352.70,214.04) scale(1,1.1)" font-size="5.3" fill="#d0d0d0" text-anchor="start" style="font-family:'Liberation Mono',monospace;font-weight:normal;white-space:pre" >Max:</text>
<text x="0" y="0" transform="translate(386.70,214.04) scale(1,1.1)" font-size="5.3" fill="#d0d0d0" text-anchor="end" style="font-family:'Liberation Mono',monospace;font-weight:normal;white-space:pre" >5.8%</text>
<rect x="112.00" y="216.66" width="4.80" height="4.60" fill="#812c81" />
<rect x="112.70" y="217.36" width="3.40" height="3.20" fill="#ce50ce" />
<text x="0" y="0" transform="translate(119.70,220.76) scale(1,1.1)" font-size="5.3" fill="#d0d0d0" text-anchor="start" style="font-family:'Liberation Mono',monospace;font-weight:normal;white-space:pre" >I/O wait</text>
<text x="0" y="0" transform="translate(160.70,220.76) scale(1,1.1)" font-size="5.3" fill="#d0d0d0" text-anchor="start" style="font-family:'Liberation Mono',monospace;font-weight:normal;white-space:pre" >Current:</text>
<text x="0" y="0" transform="translate(208.80,220.76) scale(1,1.1)" font-size="5.3" fill="#d0d0d0" text-anchor="end" style="font-family:'Liberation Mono',monospace;font-weight:normal;white-space:pre" >0.1%</text>
<text x="0" y="0" transform="translate(229.80,220.76) scale(1,1.1)" font-size="5.3" fill="#d0d0d0" text-anchor="start" style="font-family:'Liberation Mono',monospace;font-weight:normal;white-space:pre" >Average:</text>
<text x="0" y="0" transform="translate(277.00,220.76) scale(1,1.1)" font-size="5.3" fill="#d0d0d0" text-anchor="end" style="font-family:'Liberation Mono',monospace;font-weight:normal;white-space:pre" >0.1%</text>
<text x="0" y="0" transform="translate(298.00,220.76) scale(1,1.1)" font-size="5.3" fill="#d0d0d0" text-anchor="start" style="font-family:'Liberation Mono',monospace;font-weight:normal;white-space:pre" >Min:</text>
<text x="0" y="0" transform="translate(332.10,220.76) scale(1,1.1)" font-size="5.3" fill="#d0d0d0" text-anchor="end" style="font-family:'Liberation Mono',monospace;font-weight:normal;white-space:pre" >0.0%</text>
<text x="0" y="0" transform="translate(352.70,220.76) scale(1,1.1)" font-size="5.3" fill="#d0d0d0" text-anchor="start" style="font-family:'Liberation Mono',monospace;font-weight:normal;white-space:pre" >Max:</text>
<text x="0" y="0" transform="translate(386.70,220.76) scale(1,1.1)" font-size="5.3" fill="#d0d0d0" text-anchor="end" style="font-family:'Liberation Mono',monospace;font-weight:normal;white-space:pre" >1.1%</text>
<rect x="112.00" y="223.38" width="4.80" height="4.60" fill="#545466" />
<rect x="112.70" y="224.08" width="3.40" height="3.20" fill="#8b8ba6" />
<text x="0" y="0" transform="translate(119.70,227.48) scale(1,1.1)" font-size="5.3" fill="#d0d0d0" text-anchor="start" style="font-family:'Liberation Mono',monospace;font-weight:normal;white-space:pre" >IRQ</text>
<text x="0" y="0" transform="translate(160.70,227.48) scale(1,1.1)" font-size="5.3" fill="#d0d0d0" text-anchor="start" style="font-family:'Liberation Mono',monospace;font-weight:normal;white-space:pre" >Current:</text>
<text x="0" y="0" transform="translate(208.80,227.48) scale(1,1.1)" font-size="5.3" fill="#d0d0d0" text-anchor="end" style="font-family:'Liberation Mono',monospace;font-weight:normal;white-space:pre" >0.0%</text>
<text x="0" y="0" transform="translate(229.80,227.48) scale(1,1.1)" font-size="5.3" fill="#d0d0d0" text-anchor="start" style="font-family:'Liberation Mono',monospace;font-weight:normal;white-space:pre" >Average:</text>
<text x="0" y="0" transform="translate(277.00,227.48) scale(1,1.1)" font-size="5.3" fill="#d0d0d0" text-anchor="end" style="font-family:'Liberation Mono',monospace;font-weight:normal;white-space:pre" >0.0%</text>
<text x="0" y="0" transform="translate(298.00,227.48) scale(1,1.1)" font-size="5.3" fill="#d0d0d0" text-anchor="start" style="font-family:'Liberation Mono',monospace;font-weight:normal;white-space:pre" >Min:</text>
<text x="0" y="0" transform="translate(332.10,227.48) scale(1,1.1)" font-size="5.3" fill="#d0d0d0" text-anchor="end" style="font-family:'Liberation Mono',monospace;font-weight:normal;white-space:pre" >0.0%</text>
<text x="0" y="0" transform="translate(352.70,227.48) scale(1,1.1)" font-size="5.3" fill="#d0d0d0" text-anchor="start" style="font-family:'Liberation Mono',monospace;font-weight:normal;white-space:pre" >Max:</text>
<text x="0" y="0" transform="translate(386.70,227.48) scale(1,1.1)" font-size="5.3" fill="#d0d0d0" text-anchor="end" style="font-family:'Liberation Mono',monospace;font-weight:normal;white-space:pre" >0.0%</text>
<rect x="112.00" y="230.10" width="4.80" height="4.60" fill="#7b5225" />
<rect x="112.70" y="230.80" width="3.40" height="3.20" fill="#c58945" />
<text x="0" y="0" transform="translate(119.70,234.20) scale(1,1.1)" font-size="5.3" fill="#d0d0d0" text-anchor="start" style="font-family:'Liberation Mono',monospace;font-weight:normal;white-space:pre" >softIRQ</text>
<text x="0" y="0" transform="translate(160.70,234.20) scale(1,1.1)" font-size="5.3" fill="#d0d0d0" text-anchor="start" style="font-family:'Liberation Mono',monospace;font-weight:normal;white-space:pre" >Current:</text>
<text x="0" y="0" transform="translate(208.80,234.20) scale(1,1.1)" font-size="5.3" fill="#d0d0d0" text-anchor="end" style="font-family:'Liberation Mono',monospace;font-weight:normal;white-space:pre" >2.2%</text>
<text x="0" y="0" transform="translate(229.80,234.20) scale(1,1.1)" font-size="5.3" fill="#d0d0d0" text-anchor="start" style="font-family:'Liberation Mono',monospace;font-weight:normal;white-space:pre" >Average:</text>
<text x="0" y="0" transform="translate(277.00,234.20) scale(1,1.1)" font-size="5.3" fill="#d0d0d0" text-anchor="end" style="font-family:'Liberation Mono',monospace;font-weight:normal;white-space:pre" >2.1%</text>
<text x="0" y="0" transform="translate(298.00,234.20) scale(1,1.1)" font-size="5.3" fill="#d0d0d0" text-anchor="start" style="font-family:'Liberation Mono',monospace;font-weight:normal;white-space:pre" >Min:</text>
<text x="0" y="0" transform="translate(332.10,234.20) scale(1,1.1)" font-size="5.3" fill="#d0d0d0" text-anchor="end" style="font-family:'Liberation Mono',monospace;font-weight:normal;white-space:pre" >1.2%</text>
<text x="0" y="0" transform="translate(352.70,234.20) scale(1,1.1)" font-size="5.3" fill="#d0d0d0" text-anchor="start" style="font-family:'Liberation Mono',monospace;font-weight:normal;white-space:pre" >Max:</text>
<text x="0" y="0" transform="translate(386.70,234.20) scale(1,1.1)" font-size="5.3" fill="#d0d0d0" text-anchor="end" style="font-family:'Liberation Mono',monospace;font-weight:normal;white-space:pre" >2.6%</text>
<rect x="112.00" y="236.82" width="4.80" height="4.60" fill="#2c812c" />
<rect x="112.70" y="237.52" width="3.40" height="3.20" fill="#50ce50" />
<text x="0" y="0" transform="translate(119.70,240.92) scale(1,1.1)" font-size="5.3" fill="#d0d0d0" text-anchor="start" style="font-family:'Liberation Mono',monospace;font-weight:normal;white-space:pre" >steal</text>
<text x="0" y="0" transform="translate(160.70,240.92) scale(1,1.1)" font-size="5.3" fill="#d0d0d0" text-anchor="start" style="font-family:'Liberation Mono',monospace;font-weight:normal;white-space:pre" >Current:</text>
<text x="0" y="0" transform="translate(208.80,240.92) scale(1,1.1)" font-size="5.3" fill="#d0d0d0" text-anchor="end" style="font-family:'Liberation Mono',monospace;font-weight:normal;white-space:pre" >0.0%</text>
<text x="0" y="0" transform="translate(229.80,240.92) scale(1,1.1)" font-size="5.3" fill="#d0d0d0" text-anchor="start" style="font-family:'Liberation Mono',monospace;font-weight:normal;white-space:pre" >Average:</text>
<text x="0" y="0" transform="translate(277.00,240.92) scale(1,1.1)" font-size="5.3" fill="#d0d0d0" text-anchor="end" style="font-family:'Liberation Mono',monospace;font-weight:normal;white-space:pre" >0.0%</text>
<text x="0" y="0" transform="translate(298.00,240.92) scale(1,1.1)" font-size="5.3" fill="#d0d0d0" text-anchor="start" style="font-family:'Liberation Mono',monospace;font-weight:normal;white-space:pre" >Min:</text>
<text x="0" y="0" transform="translate(332.10,240.92) scale(1,1.1)" font-size="5.3" fill="#d0d0d0" text-anchor="end" style="font-family:'Liberation Mono',monospace;font-weight:normal;white-space:pre" >0.0%</text>
<text x="0" y="0" transform="translate(352.70,240.92) scale(1,1.1)" font-size="5.3" fill="#d0d0d0" text-anchor="start" style="font-family:'Liberation Mono',monospace;font-weight:normal;white-space:pre" >Max:</text>
<text x="0" y="0" transform="translate(386.70,240.92) scale(1,1.1)" font-size="5.3" fill="#d0d0d0" text-anchor="end" style="font-family:'Liberation Mono',monospace;font-weight:normal;white-space:pre" >0.0%</text>
<rect x="112.00" y="243.54" width="4.80" height="4.60" fill="#2c4e2c" />
<rect x="112.70" y="244.24" width="3.40" height="3.20" fill="#508250" />
<text x="0" y="0" transform="translate(119.70,247.64) scale(1,1.1)" font-size="5.3" fill="#d0d0d0" text-anchor="start" style="font-family:'Liberation Mono',monospace;font-weight:normal;white-space:pre" >guest</text>
<text x="0" y="0" transform="translate(160.70,247.64) scale(1,1.1)" font-size="5.3" fill="#d0d0d0" text-anchor="start" style="font-family:'Liberation Mono',monospace;font-weight:normal;white-space:pre" >Current:</text>
<text x="0" y="0" transform="translate(208.80,247.64) scale(1,1.1)" font-size="5.3" fill="#d0d0d0" text-anchor="end" style="font-family:'Liberation Mono',monospace;font-weight:normal;white-space:pre" >0.0%</text>
<text x="0" y="0" transform="translate(229.80,247.64) scale(1,1.1)" font-size="5.3" fill="#d0d0d0" text-anchor="start" style="font-family:'Liberation Mono',monospace;font-weight:normal;white-space:pre" >Average:</text>
<text x="0" y="0" transform="translate(277.00,247.64) scale(1,1.1)" font-size="5.3" fill="#d0d0d0" text-anchor="end" style="font-family:'Liberation Mono',monospace;font-weight:normal;white-space:pre" >0.0%</text>
<text x="0" y="0" transform="translate(298.00,247.64) scale(1,1.1)" font-size="5.3" fill="#d0d0d0" text-anchor="start" style="font-family:'Liberation Mono',monospace;font-weight:normal;white-space:pre" >Min:</text>
<text x="0" y="0" transform="translate(332.10,247.64) scale(1,1.1)" font-size="5.3" fill="#d0d0d0" text-anchor="end" style="font-family:'Liberation Mono',monospace;font-weight:normal;white-space:pre" >0.0%</text>
<text x="0" y="0" transform="translate(352.70,247.64) scale(1,1.1)" font-size="5.3" fill="#d0d0d0" text-anchor="start" style="font-family:'Liberation Mono',monospace;font-weight:normal;white-space:pre" >Max:</text>
<text x="0" y="0" transform="translate(386.70,247.64) scale(1,1.1)" font-size="5.3" fill="#d0d0d0" text-anchor="end" style="font-family:'Liberation Mono',monospace;font-weight:normal;white-space:pre" >0.0%</text>
<rect x="452.30" y="99.90" width="112.20" height="36.10" fill="#000000" />
<text x="0" y="0" transform="translate(498.10,97.30) scale(1,1.1)" font-size="6.5" fill="#e6e6e6" text-anchor="middle" style="font-family:'Liberation Mono',monospace;font-weight:normal;white-space:pre" >Context switches and forks  (1day)</text>
<text x="0" y="0" font-size="5.6" fill="#d0d0d0" text-anchor="middle" style="font-family:'Liberation Mono',monospace;white-space:pre" transform="translate(422.30,117.70) rotate(-90)" dominant-baseline="central">CS &amp; forks/s</text>
<text x="0" y="0" transform="translate(448.20,101.90) scale(1,1.1)" font-size="5.6" fill="#d0d0d0" text-anchor="end" style="font-family:'Liberation Mono',monospace;font-weight:normal;white-space:pre" >20 k</text>
<text x="0" y="0" transform="translate(448.20,119.95) scale(1,1.1)" font-size="5.6" fill="#d0d0d0" text-anchor="end" style="font-family:'Liberation Mono',monospace;font-weight:normal;white-space:pre" >10 k</text>
<text x="0" y="0" transform="translate(438.00,138.00) scale(1,1.1)" font-size="5.6" fill="#d0d0d0" text-anchor="start" style="font-family:'Liberation Mono',monospace;font-weight:normal;white-space:pre" >0</text>
<polygon points="452.30,108.02 454.70,104.41 456.00,110.73 457.50,117.95 459.20,120.66 460.00,122.46 469.50,123.00 470.20,126.61 500.00,126.43 520.00,126.25 530.00,126.25 530.90,124.27 531.80,126.25 541.00,126.07 541.90,121.56 542.80,125.89 545.00,125.53 546.00,119.75 548.70,110.19 551.30,118.49 553.40,116.87 555.00,118.31 557.50,110.55 559.10,118.31 561.20,114.88 563.30,117.95 564.50,117.05 564.50,136.00 452.30,136.00" fill="#44aaee" />
<line x1="452.30" y1="99.90" x2="564.50" y2="99.90" stroke="rgba(110,110,90,0.14)" stroke-width="0.9" />
<line x1="452.30" y1="103.51" x2="564.50" y2="103.51" stroke="rgba(110,110,90,0.14)" stroke-width="0.9" />
<line x1="452.30" y1="107.12" x2="564.50" y2="107.12" stroke="rgba(110,110,90,0.14)" stroke-width="0.9" />
<line x1="452.30" y1="110.73" x2="564.50" y2="110.73" stroke="rgba(110,110,90,0.14)" stroke-width="0.9" />
<line x1="452.30" y1="114.34" x2="564.50" y2="114.34" stroke="rgba(110,110,90,0.14)" stroke-width="0.9" />
<line x1="452.30" y1="117.95" x2="564.50" y2="117.95" stroke="rgba(110,110,90,0.14)" stroke-width="0.9" />
<line x1="452.30" y1="121.56" x2="564.50" y2="121.56" stroke="rgba(110,110,90,0.14)" stroke-width="0.9" />
<line x1="452.30" y1="125.17" x2="564.50" y2="125.17" stroke="rgba(110,110,90,0.14)" stroke-width="0.9" />
<line x1="452.30" y1="128.78" x2="564.50" y2="128.78" stroke="rgba(110,110,90,0.14)" stroke-width="0.9" />
<line x1="452.30" y1="132.39" x2="564.50" y2="132.39" stroke="rgba(110,110,90,0.14)" stroke-width="0.9" />
<line x1="452.30" y1="136.00" x2="564.50" y2="136.00" stroke="rgba(110,110,90,0.14)" stroke-width="0.9" />
<line x1="454.50" y1="99.90" x2="454.50" y2="136.00" stroke="rgba(110,110,90,0.14)" stroke-width="0.9" />
<line x1="459.13" y1="99.90" x2="459.13" y2="136.00" stroke="rgba(110,110,90,0.14)" stroke-width="0.9" />
<line x1="463.77" y1="99.90" x2="463.77" y2="136.00" stroke="rgba(110,110,90,0.14)" stroke-width="0.9" />
<line x1="468.40" y1="99.90" x2="468.40" y2="136.00" stroke="rgba(110,110,90,0.2)" stroke-width="0.9" />
<line x1="473.03" y1="99.90" x2="473.03" y2="136.00" stroke="rgba(110,110,90,0.14)" stroke-width="0.9" />
<line x1="477.67" y1="99.90" x2="477.67" y2="136.00" stroke="rgba(110,110,90,0.14)" stroke-width="0.9" />
<line x1="482.30" y1="99.90" x2="482.30" y2="136.00" stroke="rgba(110,110,90,0.14)" stroke-width="0.9" />
<line x1="486.93" y1="99.90" x2="486.93" y2="136.00" stroke="rgba(110,110,90,0.14)" stroke-width="0.9" />
<line x1="491.56" y1="99.90" x2="491.56" y2="136.00" stroke="rgba(110,110,90,0.14)" stroke-width="0.9" />
<line x1="496.20" y1="99.90" x2="496.20" y2="136.00" stroke="rgba(110,110,90,0.2)" stroke-width="0.9" />
<line x1="500.83" y1="99.90" x2="500.83" y2="136.00" stroke="rgba(110,110,90,0.14)" stroke-width="0.9" />
<line x1="505.46" y1="99.90" x2="505.46" y2="136.00" stroke="rgba(110,110,90,0.14)" stroke-width="0.9" />
<line x1="510.10" y1="99.90" x2="510.10" y2="136.00" stroke="rgba(110,110,90,0.14)" stroke-width="0.9" />
<line x1="514.73" y1="99.90" x2="514.73" y2="136.00" stroke="rgba(110,110,90,0.14)" stroke-width="0.9" />
<line x1="519.36" y1="99.90" x2="519.36" y2="136.00" stroke="rgba(110,110,90,0.14)" stroke-width="0.9" />
<line x1="524.00" y1="99.90" x2="524.00" y2="136.00" stroke="rgba(110,110,90,0.2)" stroke-width="0.9" />
<line x1="528.63" y1="99.90" x2="528.63" y2="136.00" stroke="rgba(110,110,90,0.14)" stroke-width="0.9" />
<line x1="533.26" y1="99.90" x2="533.26" y2="136.00" stroke="rgba(110,110,90,0.14)" stroke-width="0.9" />
<line x1="537.89" y1="99.90" x2="537.89" y2="136.00" stroke="rgba(110,110,90,0.14)" stroke-width="0.9" />
<line x1="542.53" y1="99.90" x2="542.53" y2="136.00" stroke="rgba(110,110,90,0.14)" stroke-width="0.9" />
<line x1="547.16" y1="99.90" x2="547.16" y2="136.00" stroke="rgba(110,110,90,0.14)" stroke-width="0.9" />
<line x1="551.79" y1="99.90" x2="551.79" y2="136.00" stroke="rgba(110,110,90,0.2)" stroke-width="0.9" />
<line x1="556.43" y1="99.90" x2="556.43" y2="136.00" stroke="rgba(110,110,90,0.14)" stroke-width="0.9" />
<line x1="561.06" y1="99.90" x2="561.06" y2="136.00" stroke="rgba(110,110,90,0.14)" stroke-width="0.9" />
<path d="M450.70,99.70 L452.30,97.30 L453.90,99.70 Z" fill="#ffffff"/>
<path d="M565.90,134.40 L568.30,136.00 L565.90,137.60 Z" fill="#ffffff"/>
<text x="0" y="0" transform="translate(467.80,144.00) scale(1,1.1)" font-size="5.6" fill="#d0d0d0" text-anchor="middle" style="font-family:'Liberation Mono',monospace;font-weight:normal;white-space:pre" >18:00</text>
<text x="0" y="0" transform="translate(495.50,144.00) scale(1,1.1)" font-size="5.6" fill="#d0d0d0" text-anchor="middle" style="font-family:'Liberation Mono',monospace;font-weight:normal;white-space:pre" >00:00</text>
<text x="0" y="0" transform="translate(523.60,144.00) scale(1,1.1)" font-size="5.6" fill="#d0d0d0" text-anchor="middle" style="font-family:'Liberation Mono',monospace;font-weight:normal;white-space:pre" >06:00</text>
<text x="0" y="0" transform="translate(551.40,144.00) scale(1,1.1)" font-size="5.6" fill="#d0d0d0" text-anchor="middle" style="font-family:'Liberation Mono',monospace;font-weight:normal;white-space:pre" >12:00</text>
<text x="0" y="0" font-size="4.742424242424243" fill="#3e3e3e" text-anchor="middle" style="font-family:'Liberation Mono',monospace;white-space:pre" transform="translate(576.00,119.10) rotate(-90)" dominant-baseline="central">RRDTOOL / TOBI OETIKER</text>
<rect x="423.40" y="148.00" width="4.30" height="4.40" fill="#2c5f81" />
<rect x="424.10" y="148.70" width="2.90" height="3.00" fill="#509bce" />
<text x="0" y="0" transform="translate(430.20,152.00) scale(1,1.1)" font-size="5.5" fill="#d0d0d0" text-anchor="start" style="font-family:'Liberation Mono',monospace;font-weight:normal;white-space:pre" >Context switches</text>
<text x="0" y="0" transform="translate(508.90,152.00) scale(1,1.1)" font-size="5.5" fill="#d0d0d0" text-anchor="start" style="font-family:'Liberation Mono',monospace;font-weight:normal;white-space:pre" >Current:</text>
<text x="0" y="0" transform="translate(559.50,152.00) scale(1,1.1)" font-size="5.5" fill="#d0d0d0" text-anchor="end" style="font-family:'Liberation Mono',monospace;font-weight:normal;white-space:pre" >10407</text>
<rect x="423.40" y="154.60" width="4.30" height="4.40" fill="#2c2c81" />
<rect x="424.10" y="155.30" width="2.90" height="3.00" fill="#5050ce" />
<text x="0" y="0" transform="translate(430.20,158.60) scale(1,1.1)" font-size="5.5" fill="#d0d0d0" text-anchor="start" style="font-family:'Liberation Mono',monospace;font-weight:normal;white-space:pre" >Forks</text>
<text x="0" y="0" transform="translate(508.90,158.60) scale(1,1.1)" font-size="5.5" fill="#d0d0d0" text-anchor="start" style="font-family:'Liberation Mono',monospace;font-weight:normal;white-space:pre" >Current:</text>
<text x="0" y="0" transform="translate(559.50,158.60) scale(1,1.1)" font-size="5.5" fill="#d0d0d0" text-anchor="end" style="font-family:'Liberation Mono',monospace;font-weight:normal;white-space:pre" >4</text>
<rect x="452.30" y="177.70" width="112.20" height="36.80" fill="#000000" />
<text x="0" y="0" transform="translate(498.30,175.60) scale(1,1.1)" font-size="6.5" fill="#e6e6e6" text-anchor="middle" style="font-family:'Liberation Mono',monospace;font-weight:normal;white-space:pre" >VFS usage  (1day)</text>
<text x="0" y="0" font-size="5.6" fill="#d0d0d0" text-anchor="middle" style="font-family:'Liberation Mono',monospace;white-space:pre" transform="translate(421.70,196.10) rotate(-90)" dominant-baseline="central">Percent (%)</text>
<text x="0" y="0" transform="translate(448.20,179.70) scale(1,1.1)" font-size="5.6" fill="#d0d0d0" text-anchor="end" style="font-family:'Liberation Mono',monospace;font-weight:normal;white-space:pre" >100</text>
<text x="0" y="0" transform="translate(448.20,198.10) scale(1,1.1)" font-size="5.6" fill="#d0d0d0" text-anchor="end" style="font-family:'Liberation Mono',monospace;font-weight:normal;white-space:pre" >50</text>
<text x="0" y="0" transform="translate(448.20,216.50) scale(1,1.1)" font-size="5.6" fill="#d0d0d0" text-anchor="end" style="font-family:'Liberation Mono',monospace;font-weight:normal;white-space:pre" >0</text>
<polygon points="452.30,191.68 458.20,191.68 462.80,180.28 541.90,180.28 543.90,187.27 549.80,189.29 558.00,188.92 564.50,188.52 564.50,214.50 452.30,214.50" fill="#4444ee" />
<polygon points="452.30,194.78 458.40,194.78 462.80,190.95 470.00,191.13 480.70,192.42 530.40,192.90 531.50,195.36 548.00,195.00 564.50,194.26 564.50,214.50 452.30,214.50" fill="#eeee44" />
<line x1="452.30" y1="177.70" x2="564.50" y2="177.70" stroke="rgba(80,80,60,0.2)" stroke-width="0.9" />
<line x1="452.30" y1="181.38" x2="564.50" y2="181.38" stroke="rgba(80,80,60,0.2)" stroke-width="0.9" />
<line x1="452.30" y1="185.06" x2="564.50" y2="185.06" stroke="rgba(80,80,60,0.2)" stroke-width="0.9" />
<line x1="452.30" y1="188.74" x2="564.50" y2="188.74" stroke="rgba(80,80,60,0.2)" stroke-width="0.9" />
<line x1="452.30" y1="192.42" x2="564.50" y2="192.42" stroke="rgba(80,80,60,0.2)" stroke-width="0.9" />
<line x1="452.30" y1="196.10" x2="564.50" y2="196.10" stroke="rgba(80,80,60,0.2)" stroke-width="0.9" />
<line x1="452.30" y1="199.78" x2="564.50" y2="199.78" stroke="rgba(80,80,60,0.2)" stroke-width="0.9" />
<line x1="452.30" y1="203.46" x2="564.50" y2="203.46" stroke="rgba(80,80,60,0.2)" stroke-width="0.9" />
<line x1="452.30" y1="207.14" x2="564.50" y2="207.14" stroke="rgba(80,80,60,0.2)" stroke-width="0.9" />
<line x1="452.30" y1="210.82" x2="564.50" y2="210.82" stroke="rgba(80,80,60,0.2)" stroke-width="0.9" />
<line x1="452.30" y1="214.50" x2="564.50" y2="214.50" stroke="rgba(80,80,60,0.2)" stroke-width="0.9" />
<line x1="454.50" y1="177.70" x2="454.50" y2="214.50" stroke="rgba(80,80,60,0.2)" stroke-width="0.9" />
<line x1="459.13" y1="177.70" x2="459.13" y2="214.50" stroke="rgba(80,80,60,0.2)" stroke-width="0.9" />
<line x1="463.77" y1="177.70" x2="463.77" y2="214.50" stroke="rgba(80,80,60,0.2)" stroke-width="0.9" />
<line x1="468.40" y1="177.70" x2="468.40" y2="214.50" stroke="rgba(80,80,60,0.28)" stroke-width="0.9" />
<line x1="473.03" y1="177.70" x2="473.03" y2="214.50" stroke="rgba(80,80,60,0.2)" stroke-width="0.9" />
<line x1="477.67" y1="177.70" x2="477.67" y2="214.50" stroke="rgba(80,80,60,0.2)" stroke-width="0.9" />
<line x1="482.30" y1="177.70" x2="482.30" y2="214.50" stroke="rgba(80,80,60,0.2)" stroke-width="0.9" />
<line x1="486.93" y1="177.70" x2="486.93" y2="214.50" stroke="rgba(80,80,60,0.2)" stroke-width="0.9" />
<line x1="491.56" y1="177.70" x2="491.56" y2="214.50" stroke="rgba(80,80,60,0.2)" stroke-width="0.9" />
<line x1="496.20" y1="177.70" x2="496.20" y2="214.50" stroke="rgba(80,80,60,0.28)" stroke-width="0.9" />
<line x1="500.83" y1="177.70" x2="500.83" y2="214.50" stroke="rgba(80,80,60,0.2)" stroke-width="0.9" />
<line x1="505.46" y1="177.70" x2="505.46" y2="214.50" stroke="rgba(80,80,60,0.2)" stroke-width="0.9" />
<line x1="510.10" y1="177.70" x2="510.10" y2="214.50" stroke="rgba(80,80,60,0.2)" stroke-width="0.9" />
<line x1="514.73" y1="177.70" x2="514.73" y2="214.50" stroke="rgba(80,80,60,0.2)" stroke-width="0.9" />
<line x1="519.36" y1="177.70" x2="519.36" y2="214.50" stroke="rgba(80,80,60,0.2)" stroke-width="0.9" />
<line x1="524.00" y1="177.70" x2="524.00" y2="214.50" stroke="rgba(80,80,60,0.28)" stroke-width="0.9" />
<line x1="528.63" y1="177.70" x2="528.63" y2="214.50" stroke="rgba(80,80,60,0.2)" stroke-width="0.9" />
<line x1="533.26" y1="177.70" x2="533.26" y2="214.50" stroke="rgba(80,80,60,0.2)" stroke-width="0.9" />
<line x1="537.89" y1="177.70" x2="537.89" y2="214.50" stroke="rgba(80,80,60,0.2)" stroke-width="0.9" />
<line x1="542.53" y1="177.70" x2="542.53" y2="214.50" stroke="rgba(80,80,60,0.2)" stroke-width="0.9" />
<line x1="547.16" y1="177.70" x2="547.16" y2="214.50" stroke="rgba(80,80,60,0.2)" stroke-width="0.9" />
<line x1="551.79" y1="177.70" x2="551.79" y2="214.50" stroke="rgba(80,80,60,0.28)" stroke-width="0.9" />
<line x1="556.43" y1="177.70" x2="556.43" y2="214.50" stroke="rgba(80,80,60,0.2)" stroke-width="0.9" />
<line x1="561.06" y1="177.70" x2="561.06" y2="214.50" stroke="rgba(80,80,60,0.2)" stroke-width="0.9" />
<path d="M450.70,177.50 L452.30,175.10 L453.90,177.50 Z" fill="#ffffff"/>
<path d="M565.90,212.90 L568.30,214.50 L565.90,216.10 Z" fill="#ffffff"/>
<text x="0" y="0" transform="translate(467.80,220.90) scale(1,1.1)" font-size="5.6" fill="#d0d0d0" text-anchor="middle" style="font-family:'Liberation Mono',monospace;font-weight:normal;white-space:pre" >18:00</text>
<text x="0" y="0" transform="translate(495.50,220.90) scale(1,1.1)" font-size="5.6" fill="#d0d0d0" text-anchor="middle" style="font-family:'Liberation Mono',monospace;font-weight:normal;white-space:pre" >00:00</text>
<text x="0" y="0" transform="translate(523.60,220.90) scale(1,1.1)" font-size="5.6" fill="#d0d0d0" text-anchor="middle" style="font-family:'Liberation Mono',monospace;font-weight:normal;white-space:pre" >06:00</text>
<text x="0" y="0" transform="translate(551.40,220.90) scale(1,1.1)" font-size="5.6" fill="#d0d0d0" text-anchor="middle" style="font-family:'Liberation Mono',monospace;font-weight:normal;white-space:pre" >12:00</text>
<text x="0" y="0" font-size="4.848484848484849" fill="#3e3e3e" text-anchor="middle" style="font-family:'Liberation Mono',monospace;white-space:pre" transform="translate(576.00,200.00) rotate(-90)" dominant-baseline="central">RRDTOOL / TOBI OETIKER</text>
<rect x="423.40" y="226.00" width="4.30" height="4.40" fill="#2c2c81" />
<rect x="424.10" y="226.70" width="2.90" height="3.00" fill="#5050ce" />
<text x="0" y="0" transform="translate(430.20,230.00) scale(1,1.1)" font-size="5.5" fill="#d0d0d0" text-anchor="start" style="font-family:'Liberation Mono',monospace;font-weight:normal;white-space:pre" >inode</text>
<text x="0" y="0" transform="translate(508.90,230.00) scale(1,1.1)" font-size="5.5" fill="#d0d0d0" text-anchor="start" style="font-family:'Liberation Mono',monospace;font-weight:normal;white-space:pre" >Current:</text>
<text x="0" y="0" transform="translate(559.50,230.00) scale(1,1.1)" font-size="5.5" fill="#d0d0d0" text-anchor="end" style="font-family:'Liberation Mono',monospace;font-weight:normal;white-space:pre" >70.6%</text>
<rect x="423.40" y="232.90" width="4.30" height="4.40" fill="#81812c" />
<rect x="424.10" y="233.60" width="2.90" height="3.00" fill="#cece50" />
<text x="0" y="0" transform="translate(430.20,236.90) scale(1,1.1)" font-size="5.5" fill="#d0d0d0" text-anchor="start" style="font-family:'Liberation Mono',monospace;font-weight:normal;white-space:pre" >dentry</text>
<text x="0" y="0" transform="translate(508.90,236.90) scale(1,1.1)" font-size="5.5" fill="#d0d0d0" text-anchor="start" style="font-family:'Liberation Mono',monospace;font-weight:normal;white-space:pre" >Current:</text>
<text x="0" y="0" transform="translate(559.50,236.90) scale(1,1.1)" font-size="5.5" fill="#d0d0d0" text-anchor="end" style="font-family:'Liberation Mono',monospace;font-weight:normal;white-space:pre" >54.0%</text>
<rect x="423.40" y="239.80" width="4.30" height="4.40" fill="#812c81" />
<rect x="424.10" y="240.50" width="2.90" height="3.00" fill="#ce50ce" />
<text x="0" y="0" transform="translate(430.20,243.80) scale(1,1.1)" font-size="5.5" fill="#d0d0d0" text-anchor="start" style="font-family:'Liberation Mono',monospace;font-weight:normal;white-space:pre" >file</text>
<text x="0" y="0" transform="translate(508.90,243.80) scale(1,1.1)" font-size="5.5" fill="#d0d0d0" text-anchor="start" style="font-family:'Liberation Mono',monospace;font-weight:normal;white-space:pre" >Current:</text>
<text x="0" y="0" transform="translate(559.50,243.80) scale(1,1.1)" font-size="5.5" fill="#d0d0d0" text-anchor="end" style="font-family:'Liberation Mono',monospace;font-weight:normal;white-space:pre" >0.0%</text>
<rect x="142.40" y="298.90" width="181.70" height="84.00" fill="#000000" />
<text x="0" y="0" transform="translate(223.50,296.90) scale(1,1.1)" font-size="6.5" fill="#e6e6e6" text-anchor="middle" style="font-family:'Liberation Mono',monospace;font-weight:normal;white-space:pre" >Processor 0  (1day)</text>
<text x="0" y="0" font-size="5.6" fill="#d0d0d0" text-anchor="middle" style="font-family:'Liberation Mono',monospace;white-space:pre" transform="translate(111.60,340.30) rotate(-90)" dominant-baseline="central">Percent (%)</text>
<text x="0" y="0" transform="translate(138.00,301.10) scale(1,1.1)" font-size="5.6" fill="#d0d0d0" text-anchor="end" style="font-family:'Liberation Mono',monospace;font-weight:normal;white-space:pre" >100</text>
<line x1="140.20" y1="298.90" x2="141.80" y2="298.90" stroke="#6a6a6a" stroke-width="0.8" />
<text x="0" y="0" transform="translate(138.00,309.50) scale(1,1.1)" font-size="5.6" fill="#d0d0d0" text-anchor="end" style="font-family:'Liberation Mono',monospace;font-weight:normal;white-space:pre" >90</text>
<line x1="140.20" y1="307.30" x2="141.80" y2="307.30" stroke="#6a6a6a" stroke-width="0.8" />
<text x="0" y="0" transform="translate(138.00,317.90) scale(1,1.1)" font-size="5.6" fill="#d0d0d0" text-anchor="end" style="font-family:'Liberation Mono',monospace;font-weight:normal;white-space:pre" >80</text>
<line x1="140.20" y1="315.70" x2="141.80" y2="315.70" stroke="#6a6a6a" stroke-width="0.8" />
<text x="0" y="0" transform="translate(138.00,326.30) scale(1,1.1)" font-size="5.6" fill="#d0d0d0" text-anchor="end" style="font-family:'Liberation Mono',monospace;font-weight:normal;white-space:pre" >70</text>
<line x1="140.20" y1="324.10" x2="141.80" y2="324.10" stroke="#6a6a6a" stroke-width="0.8" />
<text x="0" y="0" transform="translate(138.00,334.70) scale(1,1.1)" font-size="5.6" fill="#d0d0d0" text-anchor="end" style="font-family:'Liberation Mono',monospace;font-weight:normal;white-space:pre" >60</text>
<line x1="140.20" y1="332.50" x2="141.80" y2="332.50" stroke="#6a6a6a" stroke-width="0.8" />
<text x="0" y="0" transform="translate(138.00,343.10) scale(1,1.1)" font-size="5.6" fill="#d0d0d0" text-anchor="end" style="font-family:'Liberation Mono',monospace;font-weight:normal;white-space:pre" >50</text>
<line x1="140.20" y1="340.90" x2="141.80" y2="340.90" stroke="#6a6a6a" stroke-width="0.8" />
<text x="0" y="0" transform="translate(138.00,351.50) scale(1,1.1)" font-size="5.6" fill="#d0d0d0" text-anchor="end" style="font-family:'Liberation Mono',monospace;font-weight:normal;white-space:pre" >40</text>
<line x1="140.20" y1="349.30" x2="141.80" y2="349.30" stroke="#6a6a6a" stroke-width="0.8" />
<text x="0" y="0" transform="translate(138.00,359.90) scale(1,1.1)" font-size="5.6" fill="#d0d0d0" text-anchor="end" style="font-family:'Liberation Mono',monospace;font-weight:normal;white-space:pre" >30</text>
<line x1="140.20" y1="357.70" x2="141.80" y2="357.70" stroke="#6a6a6a" stroke-width="0.8" />
<text x="0" y="0" transform="translate(138.00,368.30) scale(1,1.1)" font-size="5.6" fill="#d0d0d0" text-anchor="end" style="font-family:'Liberation Mono',monospace;font-weight:normal;white-space:pre" >20</text>
<line x1="140.20" y1="366.10" x2="141.80" y2="366.10" stroke="#6a6a6a" stroke-width="0.8" />
<text x="0" y="0" transform="translate(138.00,376.70) scale(1,1.1)" font-size="5.6" fill="#d0d0d0" text-anchor="end" style="font-family:'Liberation Mono',monospace;font-weight:normal;white-space:pre" >10</text>
<line x1="140.20" y1="374.50" x2="141.80" y2="374.50" stroke="#6a6a6a" stroke-width="0.8" />
<text x="0" y="0" transform="translate(138.00,385.10) scale(1,1.1)" font-size="5.6" fill="#d0d0d0" text-anchor="end" style="font-family:'Liberation Mono',monospace;font-weight:normal;white-space:pre" >0</text>
<line x1="140.20" y1="382.90" x2="141.80" y2="382.90" stroke="#6a6a6a" stroke-width="0.8" />
<polygon points="142.40,371.14 143.50,366.10 144.50,368.62 145.30,363.58 146.50,367.78 147.50,364.42 148.50,366.94 149.50,368.62 150.50,374.50 152.40,376.18 155.00,377.36 180.00,377.52 183.00,378.20 185.00,377.52 295.20,377.61 296.00,373.66 296.80,371.14 297.80,373.66 299.50,368.62 300.80,373.66 302.00,372.40 303.50,374.08 305.00,371.98 306.50,374.08 308.00,373.24 309.50,374.50 311.00,371.98 312.30,373.66 313.50,367.78 314.80,372.82 316.00,371.98 317.30,373.66 318.50,370.30 320.00,373.66 321.50,372.82 322.70,374.08 323.70,371.98 324.10,375.34 324.10,382.90 142.40,382.90" fill="#4646ee" />
<polygon points="142.40,378.70 324.10,378.70 324.10,382.90 142.40,382.90" fill="#b06a80" />
<polygon points="142.40,377.86 145.00,375.34 150.00,375.76 152.00,379.37 295.00,379.37 296.00,377.44 302.00,377.44 303.00,379.37 324.10,379.37 324.10,382.90 142.40,382.90" fill="#5cc8d0" />
<polygon points="142.40,379.71 324.10,379.71 324.10,382.90 142.40,382.90" fill="#b4bc80" />
<line x1="142.40" y1="298.90" x2="324.10" y2="298.90" stroke="rgba(160,160,135,0.19)" stroke-width="0.9" />
<line x1="142.40" y1="303.10" x2="324.10" y2="303.10" stroke="rgba(160,160,135,0.19)" stroke-width="0.9" />
<line x1="142.40" y1="307.30" x2="324.10" y2="307.30" stroke="rgba(160,160,135,0.19)" stroke-width="0.9" />
<line x1="142.40" y1="311.50" x2="324.10" y2="311.50" stroke="rgba(160,160,135,0.19)" stroke-width="0.9" />
<line x1="142.40" y1="315.70" x2="324.10" y2="315.70" stroke="rgba(160,160,135,0.19)" stroke-width="0.9" />
<line x1="142.40" y1="319.90" x2="324.10" y2="319.90" stroke="rgba(160,160,135,0.19)" stroke-width="0.9" />
<line x1="142.40" y1="324.10" x2="324.10" y2="324.10" stroke="rgba(160,160,135,0.19)" stroke-width="0.9" />
<line x1="142.40" y1="328.30" x2="324.10" y2="328.30" stroke="rgba(160,160,135,0.19)" stroke-width="0.9" />
<line x1="142.40" y1="332.50" x2="324.10" y2="332.50" stroke="rgba(160,160,135,0.19)" stroke-width="0.9" />
<line x1="142.40" y1="336.70" x2="324.10" y2="336.70" stroke="rgba(160,160,135,0.19)" stroke-width="0.9" />
<line x1="142.40" y1="340.90" x2="324.10" y2="340.90" stroke="rgba(160,160,135,0.19)" stroke-width="0.9" />
<line x1="142.40" y1="345.10" x2="324.10" y2="345.10" stroke="rgba(160,160,135,0.19)" stroke-width="0.9" />
<line x1="142.40" y1="349.30" x2="324.10" y2="349.30" stroke="rgba(160,160,135,0.19)" stroke-width="0.9" />
<line x1="142.40" y1="353.50" x2="324.10" y2="353.50" stroke="rgba(160,160,135,0.19)" stroke-width="0.9" />
<line x1="142.40" y1="357.70" x2="324.10" y2="357.70" stroke="rgba(160,160,135,0.19)" stroke-width="0.9" />
<line x1="142.40" y1="361.90" x2="324.10" y2="361.90" stroke="rgba(160,160,135,0.19)" stroke-width="0.9" />
<line x1="142.40" y1="366.10" x2="324.10" y2="366.10" stroke="rgba(160,160,135,0.19)" stroke-width="0.9" />
<line x1="142.40" y1="370.30" x2="324.10" y2="370.30" stroke="rgba(160,160,135,0.19)" stroke-width="0.9" />
<line x1="142.40" y1="374.50" x2="324.10" y2="374.50" stroke="rgba(160,160,135,0.19)" stroke-width="0.9" />
<line x1="142.40" y1="378.70" x2="324.10" y2="378.70" stroke="rgba(160,160,135,0.19)" stroke-width="0.9" />
<line x1="142.40" y1="382.90" x2="324.10" y2="382.90" stroke="rgba(160,160,135,0.19)" stroke-width="0.9" />
<line x1="143.91" y1="298.90" x2="143.91" y2="382.90" stroke="rgba(160,160,135,0.19)" stroke-width="0.9" />
<line x1="151.54" y1="298.90" x2="151.54" y2="382.90" stroke="rgba(160,160,135,0.19)" stroke-width="0.9" />
<line x1="159.17" y1="298.90" x2="159.17" y2="382.90" stroke="rgba(160,160,135,0.19)" stroke-width="0.9" />
<line x1="166.80" y1="298.90" x2="166.80" y2="382.90" stroke="rgba(160,160,135,0.32)" stroke-width="0.9" />
<line x1="174.43" y1="298.90" x2="174.43" y2="382.90" stroke="rgba(160,160,135,0.19)" stroke-width="0.9" />
<line x1="182.06" y1="298.90" x2="182.06" y2="382.90" stroke="rgba(160,160,135,0.19)" stroke-width="0.9" />
<line x1="189.69" y1="298.90" x2="189.69" y2="382.90" stroke="rgba(160,160,135,0.19)" stroke-width="0.9" />
<line x1="197.32" y1="298.90" x2="197.32" y2="382.90" stroke="rgba(160,160,135,0.19)" stroke-width="0.9" />
<line x1="204.95" y1="298.90" x2="204.95" y2="382.90" stroke="rgba(160,160,135,0.19)" stroke-width="0.9" />
<line x1="212.58" y1="298.90" x2="212.58" y2="382.90" stroke="rgba(160,160,135,0.32)" stroke-width="0.9" />
<line x1="220.21" y1="298.90" x2="220.21" y2="382.90" stroke="rgba(160,160,135,0.19)" stroke-width="0.9" />
<line x1="227.84" y1="298.90" x2="227.84" y2="382.90" stroke="rgba(160,160,135,0.19)" stroke-width="0.9" />
<line x1="235.47" y1="298.90" x2="235.47" y2="382.90" stroke="rgba(160,160,135,0.19)" stroke-width="0.9" />
<line x1="243.10" y1="298.90" x2="243.10" y2="382.90" stroke="rgba(160,160,135,0.19)" stroke-width="0.9" />
<line x1="250.73" y1="298.90" x2="250.73" y2="382.90" stroke="rgba(160,160,135,0.19)" stroke-width="0.9" />
<line x1="258.36" y1="298.90" x2="258.36" y2="382.90" stroke="rgba(160,160,135,0.32)" stroke-width="0.9" />
<line x1="265.99" y1="298.90" x2="265.99" y2="382.90" stroke="rgba(160,160,135,0.19)" stroke-width="0.9" />
<line x1="273.62" y1="298.90" x2="273.62" y2="382.90" stroke="rgba(160,160,135,0.19)" stroke-width="0.9" />
<line x1="281.25" y1="298.90" x2="281.25" y2="382.90" stroke="rgba(160,160,135,0.19)" stroke-width="0.9" />
<line x1="288.88" y1="298.90" x2="288.88" y2="382.90" stroke="rgba(160,160,135,0.19)" stroke-width="0.9" />
<line x1="296.51" y1="298.90" x2="296.51" y2="382.90" stroke="rgba(160,160,135,0.19)" stroke-width="0.9" />
<line x1="304.14" y1="298.90" x2="304.14" y2="382.90" stroke="rgba(160,160,135,0.32)" stroke-width="0.9" />
<line x1="311.77" y1="298.90" x2="311.77" y2="382.90" stroke="rgba(160,160,135,0.19)" stroke-width="0.9" />
<line x1="319.40" y1="298.90" x2="319.40" y2="382.90" stroke="rgba(160,160,135,0.19)" stroke-width="0.9" />
<line x1="142.40" y1="382.90" x2="325.10" y2="382.90" stroke="#e0a040" stroke-width="1" />
<path d="M140.80,298.70 L142.40,296.30 L144.00,298.70 Z" fill="#ffffff"/>
<path d="M325.50,381.30 L327.90,382.90 L325.50,384.50 Z" fill="#ffffff"/>
<text x="0" y="0" transform="translate(167.00,390.20) scale(1,1.1)" font-size="5.6" fill="#d0d0d0" text-anchor="middle" style="font-family:'Liberation Mono',monospace;font-weight:normal;white-space:pre" >18:00</text>
<text x="0" y="0" transform="translate(213.00,390.20) scale(1,1.1)" font-size="5.6" fill="#d0d0d0" text-anchor="middle" style="font-family:'Liberation Mono',monospace;font-weight:normal;white-space:pre" >00:00</text>
<text x="0" y="0" transform="translate(258.10,390.20) scale(1,1.1)" font-size="5.6" fill="#d0d0d0" text-anchor="middle" style="font-family:'Liberation Mono',monospace;font-weight:normal;white-space:pre" >06:00</text>
<text x="0" y="0" transform="translate(304.00,390.20) scale(1,1.1)" font-size="5.6" fill="#d0d0d0" text-anchor="middle" style="font-family:'Liberation Mono',monospace;font-weight:normal;white-space:pre" >12:00</text>
<text x="0" y="0" font-size="4.666666666666664" fill="#3e3e3e" text-anchor="middle" style="font-family:'Liberation Mono',monospace;white-space:pre" transform="translate(336.00,318.40) rotate(-90)" dominant-baseline="central">RRDTOOL / TOBI OETIKER</text>
<rect x="112.40" y="394.70" width="5.20" height="4.60" fill="#2c2c81" />
<rect x="113.10" y="395.40" width="3.80" height="3.20" fill="#5050ce" />
<text x="0" y="0" transform="translate(120.00,398.80) scale(1,1.1)" font-size="5.3" fill="#d0d0d0" text-anchor="start" style="font-family:'Liberation Mono',monospace;font-weight:normal;white-space:pre" >user</text>
<text x="0" y="0" transform="translate(154.70,398.80) scale(1,1.1)" font-size="5.3" fill="#d0d0d0" text-anchor="start" style="font-family:'Liberation Mono',monospace;font-weight:normal;white-space:pre" >Cur:</text>
<text x="0" y="0" transform="translate(188.50,398.80) scale(1,1.1)" font-size="5.3" fill="#d0d0d0" text-anchor="end" style="font-family:'Liberation Mono',monospace;font-weight:normal;white-space:pre" >9.7%</text>
<text x="0" y="0" transform="translate(203.00,398.80) scale(1,1.1)" font-size="5.3" fill="#d0d0d0" text-anchor="start" style="font-family:'Liberation Mono',monospace;font-weight:normal;white-space:pre" >Avg:</text>
<text x="0" y="0" transform="translate(237.30,398.80) scale(1,1.1)" font-size="5.3" fill="#d0d0d0" text-anchor="end" style="font-family:'Liberation Mono',monospace;font-weight:normal;white-space:pre" >8.3%</text>
<text x="0" y="0" transform="translate(251.00,398.80) scale(1,1.1)" font-size="5.3" fill="#d0d0d0" text-anchor="start" style="font-family:'Liberation Mono',monospace;font-weight:normal;white-space:pre" >Min:</text>
<text x="0" y="0" transform="translate(285.60,398.80) scale(1,1.1)" font-size="5.3" fill="#d0d0d0" text-anchor="end" style="font-family:'Liberation Mono',monospace;font-weight:normal;white-space:pre" >4.9%</text>
<text x="0" y="0" transform="translate(299.40,398.80) scale(1,1.1)" font-size="5.3" fill="#d0d0d0" text-anchor="start" style="font-family:'Liberation Mono',monospace;font-weight:normal;white-space:pre" >Max:</text>
<text x="0" y="0" transform="translate(333.30,398.80) scale(1,1.1)" font-size="5.3" fill="#d0d0d0" text-anchor="end" style="font-family:'Liberation Mono',monospace;font-weight:normal;white-space:pre" >22.5%</text>
<rect x="112.40" y="401.05" width="5.20" height="4.60" fill="#81812c" />
<rect x="113.10" y="401.75" width="3.80" height="3.20" fill="#cece50" />
<text x="0" y="0" transform="translate(120.00,405.15) scale(1,1.1)" font-size="5.3" fill="#d0d0d0" text-anchor="start" style="font-family:'Liberation Mono',monospace;font-weight:normal;white-space:pre" >nice</text>
<text x="0" y="0" transform="translate(154.70,405.15) scale(1,1.1)" font-size="5.3" fill="#d0d0d0" text-anchor="start" style="font-family:'Liberation Mono',monospace;font-weight:normal;white-space:pre" >Cur:</text>
<text x="0" y="0" transform="translate(188.50,405.15) scale(1,1.1)" font-size="5.3" fill="#d0d0d0" text-anchor="end" style="font-family:'Liberation Mono',monospace;font-weight:normal;white-space:pre" >0.0%</text>
<text x="0" y="0" transform="translate(203.00,405.15) scale(1,1.1)" font-size="5.3" fill="#d0d0d0" text-anchor="start" style="font-family:'Liberation Mono',monospace;font-weight:normal;white-space:pre" >Avg:</text>
<text x="0" y="0" transform="translate(237.30,405.15) scale(1,1.1)" font-size="5.3" fill="#d0d0d0" text-anchor="end" style="font-family:'Liberation Mono',monospace;font-weight:normal;white-space:pre" >0.0%</text>
<text x="0" y="0" transform="translate(251.00,405.15) scale(1,1.1)" font-size="5.3" fill="#d0d0d0" text-anchor="start" style="font-family:'Liberation Mono',monospace;font-weight:normal;white-space:pre" >Min:</text>
<text x="0" y="0" transform="translate(285.60,405.15) scale(1,1.1)" font-size="5.3" fill="#d0d0d0" text-anchor="end" style="font-family:'Liberation Mono',monospace;font-weight:normal;white-space:pre" >0.0%</text>
<text x="0" y="0" transform="translate(299.40,405.15) scale(1,1.1)" font-size="5.3" fill="#d0d0d0" text-anchor="start" style="font-family:'Liberation Mono',monospace;font-weight:normal;white-space:pre" >Max:</text>
<text x="0" y="0" transform="translate(333.30,405.15) scale(1,1.1)" font-size="5.3" fill="#d0d0d0" text-anchor="end" style="font-family:'Liberation Mono',monospace;font-weight:normal;white-space:pre" >0.1%</text>
<rect x="112.40" y="407.40" width="5.20" height="4.60" fill="#2c8181" />
<rect x="113.10" y="408.10" width="3.80" height="3.20" fill="#50cece" />
<text x="0" y="0" transform="translate(120.00,411.50) scale(1,1.1)" font-size="5.3" fill="#d0d0d0" text-anchor="start" style="font-family:'Liberation Mono',monospace;font-weight:normal;white-space:pre" >system</text>
<text x="0" y="0" transform="translate(154.70,411.50) scale(1,1.1)" font-size="5.3" fill="#d0d0d0" text-anchor="start" style="font-family:'Liberation Mono',monospace;font-weight:normal;white-space:pre" >Cur:</text>
<text x="0" y="0" transform="translate(188.50,411.50) scale(1,1.1)" font-size="5.3" fill="#d0d0d0" text-anchor="end" style="font-family:'Liberation Mono',monospace;font-weight:normal;white-space:pre" >3.3%</text>
<text x="0" y="0" transform="translate(203.00,411.50) scale(1,1.1)" font-size="5.3" fill="#d0d0d0" text-anchor="start" style="font-family:'Liberation Mono',monospace;font-weight:normal;white-space:pre" >Avg:</text>
<text x="0" y="0" transform="translate(237.30,411.50) scale(1,1.1)" font-size="5.3" fill="#d0d0d0" text-anchor="end" style="font-family:'Liberation Mono',monospace;font-weight:normal;white-space:pre" >2.8%</text>
<text x="0" y="0" transform="translate(251.00,411.50) scale(1,1.1)" font-size="5.3" fill="#d0d0d0" text-anchor="start" style="font-family:'Liberation Mono',monospace;font-weight:normal;white-space:pre" >Min:</text>
<text x="0" y="0" transform="translate(285.60,411.50) scale(1,1.1)" font-size="5.3" fill="#d0d0d0" text-anchor="end" style="font-family:'Liberation Mono',monospace;font-weight:normal;white-space:pre" >1.8%</text>
<text x="0" y="0" transform="translate(299.40,411.50) scale(1,1.1)" font-size="5.3" fill="#d0d0d0" text-anchor="start" style="font-family:'Liberation Mono',monospace;font-weight:normal;white-space:pre" >Max:</text>
<text x="0" y="0" transform="translate(333.30,411.50) scale(1,1.1)" font-size="5.3" fill="#d0d0d0" text-anchor="end" style="font-family:'Liberation Mono',monospace;font-weight:normal;white-space:pre" >6.4%</text>
<rect x="112.40" y="413.75" width="5.20" height="4.60" fill="#812c81" />
<rect x="113.10" y="414.45" width="3.80" height="3.20" fill="#ce50ce" />
<text x="0" y="0" transform="translate(120.00,417.85) scale(1,1.1)" font-size="5.3" fill="#d0d0d0" text-anchor="start" style="font-family:'Liberation Mono',monospace;font-weight:normal;white-space:pre" >I/O wait</text>
<text x="0" y="0" transform="translate(154.70,417.85) scale(1,1.1)" font-size="5.3" fill="#d0d0d0" text-anchor="start" style="font-family:'Liberation Mono',monospace;font-weight:normal;white-space:pre" >Cur:</text>
<text x="0" y="0" transform="translate(188.50,417.85) scale(1,1.1)" font-size="5.3" fill="#d0d0d0" text-anchor="end" style="font-family:'Liberation Mono',monospace;font-weight:normal;white-space:pre" >0.1%</text>
<text x="0" y="0" transform="translate(203.00,417.85) scale(1,1.1)" font-size="5.3" fill="#d0d0d0" text-anchor="start" style="font-family:'Liberation Mono',monospace;font-weight:normal;white-space:pre" >Avg:</text>
<text x="0" y="0" transform="translate(237.30,417.85) scale(1,1.1)" font-size="5.3" fill="#d0d0d0" text-anchor="end" style="font-family:'Liberation Mono',monospace;font-weight:normal;white-space:pre" >0.1%</text>
<text x="0" y="0" transform="translate(251.00,417.85) scale(1,1.1)" font-size="5.3" fill="#d0d0d0" text-anchor="start" style="font-family:'Liberation Mono',monospace;font-weight:normal;white-space:pre" >Min:</text>
<text x="0" y="0" transform="translate(285.60,417.85) scale(1,1.1)" font-size="5.3" fill="#d0d0d0" text-anchor="end" style="font-family:'Liberation Mono',monospace;font-weight:normal;white-space:pre" >0.0%</text>
<text x="0" y="0" transform="translate(299.40,417.85) scale(1,1.1)" font-size="5.3" fill="#d0d0d0" text-anchor="start" style="font-family:'Liberation Mono',monospace;font-weight:normal;white-space:pre" >Max:</text>
<text x="0" y="0" transform="translate(333.30,417.85) scale(1,1.1)" font-size="5.3" fill="#d0d0d0" text-anchor="end" style="font-family:'Liberation Mono',monospace;font-weight:normal;white-space:pre" >1.1%</text>
<rect x="382.70" y="298.90" width="181.70" height="84.00" fill="#000000" />
<text x="0" y="0" transform="translate(463.80,296.90) scale(1,1.1)" font-size="6.5" fill="#e6e6e6" text-anchor="middle" style="font-family:'Liberation Mono',monospace;font-weight:normal;white-space:pre" >Processor 1  (1day)</text>
<text x="0" y="0" font-size="5.6" fill="#d0d0d0" text-anchor="middle" style="font-family:'Liberation Mono',monospace;white-space:pre" transform="translate(351.90,340.30) rotate(-90)" dominant-baseline="central">Percent (%)</text>
<text x="0" y="0" transform="translate(378.30,301.10) scale(1,1.1)" font-size="5.6" fill="#d0d0d0" text-anchor="end" style="font-family:'Liberation Mono',monospace;font-weight:normal;white-space:pre" >100</text>
<line x1="380.50" y1="298.90" x2="382.10" y2="298.90" stroke="#6a6a6a" stroke-width="0.8" />
<text x="0" y="0" transform="translate(378.30,309.50) scale(1,1.1)" font-size="5.6" fill="#d0d0d0" text-anchor="end" style="font-family:'Liberation Mono',monospace;font-weight:normal;white-space:pre" >90</text>
<line x1="380.50" y1="307.30" x2="382.10" y2="307.30" stroke="#6a6a6a" stroke-width="0.8" />
<text x="0" y="0" transform="translate(378.30,317.90) scale(1,1.1)" font-size="5.6" fill="#d0d0d0" text-anchor="end" style="font-family:'Liberation Mono',monospace;font-weight:normal;white-space:pre" >80</text>
<line x1="380.50" y1="315.70" x2="382.10" y2="315.70" stroke="#6a6a6a" stroke-width="0.8" />
<text x="0" y="0" transform="translate(378.30,326.30) scale(1,1.1)" font-size="5.6" fill="#d0d0d0" text-anchor="end" style="font-family:'Liberation Mono',monospace;font-weight:normal;white-space:pre" >70</text>
<line x1="380.50" y1="324.10" x2="382.10" y2="324.10" stroke="#6a6a6a" stroke-width="0.8" />
<text x="0" y="0" transform="translate(378.30,334.70) scale(1,1.1)" font-size="5.6" fill="#d0d0d0" text-anchor="end" style="font-family:'Liberation Mono',monospace;font-weight:normal;white-space:pre" >60</text>
<line x1="380.50" y1="332.50" x2="382.10" y2="332.50" stroke="#6a6a6a" stroke-width="0.8" />
<text x="0" y="0" transform="translate(378.30,343.10) scale(1,1.1)" font-size="5.6" fill="#d0d0d0" text-anchor="end" style="font-family:'Liberation Mono',monospace;font-weight:normal;white-space:pre" >50</text>
<line x1="380.50" y1="340.90" x2="382.10" y2="340.90" stroke="#6a6a6a" stroke-width="0.8" />
<text x="0" y="0" transform="translate(378.30,351.50) scale(1,1.1)" font-size="5.6" fill="#d0d0d0" text-anchor="end" style="font-family:'Liberation Mono',monospace;font-weight:normal;white-space:pre" >40</text>
<line x1="380.50" y1="349.30" x2="382.10" y2="349.30" stroke="#6a6a6a" stroke-width="0.8" />
<text x="0" y="0" transform="translate(378.30,359.90) scale(1,1.1)" font-size="5.6" fill="#d0d0d0" text-anchor="end" style="font-family:'Liberation Mono',monospace;font-weight:normal;white-space:pre" >30</text>
<line x1="380.50" y1="357.70" x2="382.10" y2="357.70" stroke="#6a6a6a" stroke-width="0.8" />
<text x="0" y="0" transform="translate(378.30,368.30) scale(1,1.1)" font-size="5.6" fill="#d0d0d0" text-anchor="end" style="font-family:'Liberation Mono',monospace;font-weight:normal;white-space:pre" >20</text>
<line x1="380.50" y1="366.10" x2="382.10" y2="366.10" stroke="#6a6a6a" stroke-width="0.8" />
<text x="0" y="0" transform="translate(378.30,376.70) scale(1,1.1)" font-size="5.6" fill="#d0d0d0" text-anchor="end" style="font-family:'Liberation Mono',monospace;font-weight:normal;white-space:pre" >10</text>
<line x1="380.50" y1="374.50" x2="382.10" y2="374.50" stroke="#6a6a6a" stroke-width="0.8" />
<text x="0" y="0" transform="translate(378.30,385.10) scale(1,1.1)" font-size="5.6" fill="#d0d0d0" text-anchor="end" style="font-family:'Liberation Mono',monospace;font-weight:normal;white-space:pre" >0</text>
<line x1="380.50" y1="382.90" x2="382.10" y2="382.90" stroke="#6a6a6a" stroke-width="0.8" />
<polygon points="382.70,371.14 383.80,366.10 384.80,368.62 385.60,363.58 386.80,367.78 387.80,364.42 388.80,366.94 389.80,368.62 390.80,374.50 392.70,376.18 395.30,377.36 420.30,377.52 423.30,378.20 425.30,377.52 535.50,377.61 536.30,373.66 537.10,371.14 538.10,373.66 539.80,368.62 541.10,373.66 542.30,372.40 543.80,374.08 545.30,371.98 546.80,374.08 548.30,373.24 549.80,374.50 551.30,371.98 552.60,373.66 553.80,367.78 555.10,372.82 556.30,371.98 557.60,373.66 558.80,370.30 560.30,373.66 561.80,372.82 563.00,374.08 564.00,371.98 564.40,375.34 564.40,382.90 382.70,382.90" fill="#4646ee" />
<polygon points="382.70,378.70 564.40,378.70 564.40,382.90 382.70,382.90" fill="#b06a80" />
<polygon points="382.70,377.86 385.30,375.34 390.30,375.76 392.30,379.37 535.30,379.37 536.30,377.44 542.30,377.44 543.30,379.37 564.40,379.37 564.40,382.90 382.70,382.90" fill="#5cc8d0" />
<polygon points="382.70,379.71 564.40,379.71 564.40,382.90 382.70,382.90" fill="#b4bc80" />
<line x1="382.70" y1="298.90" x2="564.40" y2="298.90" stroke="rgba(160,160,135,0.19)" stroke-width="0.9" />
<line x1="382.70" y1="303.10" x2="564.40" y2="303.10" stroke="rgba(160,160,135,0.19)" stroke-width="0.9" />
<line x1="382.70" y1="307.30" x2="564.40" y2="307.30" stroke="rgba(160,160,135,0.19)" stroke-width="0.9" />
<line x1="382.70" y1="311.50" x2="564.40" y2="311.50" stroke="rgba(160,160,135,0.19)" stroke-width="0.9" />
<line x1="382.70" y1="315.70" x2="564.40" y2="315.70" stroke="rgba(160,160,135,0.19)" stroke-width="0.9" />
<line x1="382.70" y1="319.90" x2="564.40" y2="319.90" stroke="rgba(160,160,135,0.19)" stroke-width="0.9" />
<line x1="382.70" y1="324.10" x2="564.40" y2="324.10" stroke="rgba(160,160,135,0.19)" stroke-width="0.9" />
<line x1="382.70" y1="328.30" x2="564.40" y2="328.30" stroke="rgba(160,160,135,0.19)" stroke-width="0.9" />
<line x1="382.70" y1="332.50" x2="564.40" y2="332.50" stroke="rgba(160,160,135,0.19)" stroke-width="0.9" />
<line x1="382.70" y1="336.70" x2="564.40" y2="336.70" stroke="rgba(160,160,135,0.19)" stroke-width="0.9" />
<line x1="382.70" y1="340.90" x2="564.40" y2="340.90" stroke="rgba(160,160,135,0.19)" stroke-width="0.9" />
<line x1="382.70" y1="345.10" x2="564.40" y2="345.10" stroke="rgba(160,160,135,0.19)" stroke-width="0.9" />
<line x1="382.70" y1="349.30" x2="564.40" y2="349.30" stroke="rgba(160,160,135,0.19)" stroke-width="0.9" />
<line x1="382.70" y1="353.50" x2="564.40" y2="353.50" stroke="rgba(160,160,135,0.19)" stroke-width="0.9" />
<line x1="382.70" y1="357.70" x2="564.40" y2="357.70" stroke="rgba(160,160,135,0.19)" stroke-width="0.9" />
<line x1="382.70" y1="361.90" x2="564.40" y2="361.90" stroke="rgba(160,160,135,0.19)" stroke-width="0.9" />
<line x1="382.70" y1="366.10" x2="564.40" y2="366.10" stroke="rgba(160,160,135,0.19)" stroke-width="0.9" />
<line x1="382.70" y1="370.30" x2="564.40" y2="370.30" stroke="rgba(160,160,135,0.19)" stroke-width="0.9" />
<line x1="382.70" y1="374.50" x2="564.40" y2="374.50" stroke="rgba(160,160,135,0.19)" stroke-width="0.9" />
<line x1="382.70" y1="378.70" x2="564.40" y2="378.70" stroke="rgba(160,160,135,0.19)" stroke-width="0.9" />
<line x1="382.70" y1="382.90" x2="564.40" y2="382.90" stroke="rgba(160,160,135,0.19)" stroke-width="0.9" />
<line x1="384.21" y1="298.90" x2="384.21" y2="382.90" stroke="rgba(160,160,135,0.19)" stroke-width="0.9" />
<line x1="391.84" y1="298.90" x2="391.84" y2="382.90" stroke="rgba(160,160,135,0.19)" stroke-width="0.9" />
<line x1="399.47" y1="298.90" x2="399.47" y2="382.90" stroke="rgba(160,160,135,0.19)" stroke-width="0.9" />
<line x1="407.10" y1="298.90" x2="407.10" y2="382.90" stroke="rgba(160,160,135,0.32)" stroke-width="0.9" />
<line x1="414.73" y1="298.90" x2="414.73" y2="382.90" stroke="rgba(160,160,135,0.19)" stroke-width="0.9" />
<line x1="422.36" y1="298.90" x2="422.36" y2="382.90" stroke="rgba(160,160,135,0.19)" stroke-width="0.9" />
<line x1="429.99" y1="298.90" x2="429.99" y2="382.90" stroke="rgba(160,160,135,0.19)" stroke-width="0.9" />
<line x1="437.62" y1="298.90" x2="437.62" y2="382.90" stroke="rgba(160,160,135,0.19)" stroke-width="0.9" />
<line x1="445.25" y1="298.90" x2="445.25" y2="382.90" stroke="rgba(160,160,135,0.19)" stroke-width="0.9" />
<line x1="452.88" y1="298.90" x2="452.88" y2="382.90" stroke="rgba(160,160,135,0.32)" stroke-width="0.9" />
<line x1="460.51" y1="298.90" x2="460.51" y2="382.90" stroke="rgba(160,160,135,0.19)" stroke-width="0.9" />
<line x1="468.14" y1="298.90" x2="468.14" y2="382.90" stroke="rgba(160,160,135,0.19)" stroke-width="0.9" />
<line x1="475.77" y1="298.90" x2="475.77" y2="382.90" stroke="rgba(160,160,135,0.19)" stroke-width="0.9" />
<line x1="483.40" y1="298.90" x2="483.40" y2="382.90" stroke="rgba(160,160,135,0.19)" stroke-width="0.9" />
<line x1="491.03" y1="298.90" x2="491.03" y2="382.90" stroke="rgba(160,160,135,0.19)" stroke-width="0.9" />
<line x1="498.66" y1="298.90" x2="498.66" y2="382.90" stroke="rgba(160,160,135,0.32)" stroke-width="0.9" />
<line x1="506.29" y1="298.90" x2="506.29" y2="382.90" stroke="rgba(160,160,135,0.19)" stroke-width="0.9" />
<line x1="513.92" y1="298.90" x2="513.92" y2="382.90" stroke="rgba(160,160,135,0.19)" stroke-width="0.9" />
<line x1="521.55" y1="298.90" x2="521.55" y2="382.90" stroke="rgba(160,160,135,0.19)" stroke-width="0.9" />
<line x1="529.18" y1="298.90" x2="529.18" y2="382.90" stroke="rgba(160,160,135,0.19)" stroke-width="0.9" />
<line x1="536.81" y1="298.90" x2="536.81" y2="382.90" stroke="rgba(160,160,135,0.19)" stroke-width="0.9" />
<line x1="544.44" y1="298.90" x2="544.44" y2="382.90" stroke="rgba(160,160,135,0.32)" stroke-width="0.9" />
<line x1="552.07" y1="298.90" x2="552.07" y2="382.90" stroke="rgba(160,160,135,0.19)" stroke-width="0.9" />
<line x1="559.70" y1="298.90" x2="559.70" y2="382.90" stroke="rgba(160,160,135,0.19)" stroke-width="0.9" />
<line x1="382.70" y1="382.90" x2="565.40" y2="382.90" stroke="#e0a040" stroke-width="1" />
<path d="M381.10,298.70 L382.70,296.30 L384.30,298.70 Z" fill="#ffffff"/>
<path d="M565.80,381.30 L568.20,382.90 L565.80,384.50 Z" fill="#ffffff"/>
<text x="0" y="0" transform="translate(407.30,390.20) scale(1,1.1)" font-size="5.6" fill="#d0d0d0" text-anchor="middle" style="font-family:'Liberation Mono',monospace;font-weight:normal;white-space:pre" >18:00</text>
<text x="0" y="0" transform="translate(453.30,390.20) scale(1,1.1)" font-size="5.6" fill="#d0d0d0" text-anchor="middle" style="font-family:'Liberation Mono',monospace;font-weight:normal;white-space:pre" >00:00</text>
<text x="0" y="0" transform="translate(498.40,390.20) scale(1,1.1)" font-size="5.6" fill="#d0d0d0" text-anchor="middle" style="font-family:'Liberation Mono',monospace;font-weight:normal;white-space:pre" >06:00</text>
<text x="0" y="0" transform="translate(544.30,390.20) scale(1,1.1)" font-size="5.6" fill="#d0d0d0" text-anchor="middle" style="font-family:'Liberation Mono',monospace;font-weight:normal;white-space:pre" >12:00</text>
<text x="0" y="0" font-size="4.666666666666664" fill="#3e3e3e" text-anchor="middle" style="font-family:'Liberation Mono',monospace;white-space:pre" transform="translate(576.30,318.40) rotate(-90)" dominant-baseline="central">RRDTOOL / TOBI OETIKER</text>
<rect x="352.70" y="394.70" width="5.20" height="4.60" fill="#2c2c81" />
<rect x="353.40" y="395.40" width="3.80" height="3.20" fill="#5050ce" />
<text x="0" y="0" transform="translate(360.30,398.80) scale(1,1.1)" font-size="5.3" fill="#d0d0d0" text-anchor="start" style="font-family:'Liberation Mono',monospace;font-weight:normal;white-space:pre" >user</text>
<text x="0" y="0" transform="translate(395.00,398.80) scale(1,1.1)" font-size="5.3" fill="#d0d0d0" text-anchor="start" style="font-family:'Liberation Mono',monospace;font-weight:normal;white-space:pre" >Cur:</text>
<text x="0" y="0" transform="translate(428.80,398.80) scale(1,1.1)" font-size="5.3" fill="#d0d0d0" text-anchor="end" style="font-family:'Liberation Mono',monospace;font-weight:normal;white-space:pre" >9.0%</text>
<text x="0" y="0" transform="translate(443.30,398.80) scale(1,1.1)" font-size="5.3" fill="#d0d0d0" text-anchor="start" style="font-family:'Liberation Mono',monospace;font-weight:normal;white-space:pre" >Avg:</text>
<text x="0" y="0" transform="translate(477.60,398.80) scale(1,1.1)" font-size="5.3" fill="#d0d0d0" text-anchor="end" style="font-family:'Liberation Mono',monospace;font-weight:normal;white-space:pre" >7.5%</text>
<text x="0" y="0" transform="translate(491.30,398.80) scale(1,1.1)" font-size="5.3" fill="#d0d0d0" text-anchor="start" style="font-family:'Liberation Mono',monospace;font-weight:normal;white-space:pre" >Min:</text>
<text x="0" y="0" transform="translate(525.90,398.80) scale(1,1.1)" font-size="5.3" fill="#d0d0d0" text-anchor="end" style="font-family:'Liberation Mono',monospace;font-weight:normal;white-space:pre" >4.3%</text>
<text x="0" y="0" transform="translate(539.70,398.80) scale(1,1.1)" font-size="5.3" fill="#d0d0d0" text-anchor="start" style="font-family:'Liberation Mono',monospace;font-weight:normal;white-space:pre" >Max:</text>
<text x="0" y="0" transform="translate(573.60,398.80) scale(1,1.1)" font-size="5.3" fill="#d0d0d0" text-anchor="end" style="font-family:'Liberation Mono',monospace;font-weight:normal;white-space:pre" >22.1%</text>
<rect x="352.70" y="401.05" width="5.20" height="4.60" fill="#81812c" />
<rect x="353.40" y="401.75" width="3.80" height="3.20" fill="#cece50" />
<text x="0" y="0" transform="translate(360.30,405.15) scale(1,1.1)" font-size="5.3" fill="#d0d0d0" text-anchor="start" style="font-family:'Liberation Mono',monospace;font-weight:normal;white-space:pre" >nice</text>
<text x="0" y="0" transform="translate(395.00,405.15) scale(1,1.1)" font-size="5.3" fill="#d0d0d0" text-anchor="start" style="font-family:'Liberation Mono',monospace;font-weight:normal;white-space:pre" >Cur:</text>
<text x="0" y="0" transform="translate(428.80,405.15) scale(1,1.1)" font-size="5.3" fill="#d0d0d0" text-anchor="end" style="font-family:'Liberation Mono',monospace;font-weight:normal;white-space:pre" >0.0%</text>
<text x="0" y="0" transform="translate(443.30,405.15) scale(1,1.1)" font-size="5.3" fill="#d0d0d0" text-anchor="start" style="font-family:'Liberation Mono',monospace;font-weight:normal;white-space:pre" >Avg:</text>
<text x="0" y="0" transform="translate(477.60,405.15) scale(1,1.1)" font-size="5.3" fill="#d0d0d0" text-anchor="end" style="font-family:'Liberation Mono',monospace;font-weight:normal;white-space:pre" >0.0%</text>
<text x="0" y="0" transform="translate(491.30,405.15) scale(1,1.1)" font-size="5.3" fill="#d0d0d0" text-anchor="start" style="font-family:'Liberation Mono',monospace;font-weight:normal;white-space:pre" >Min:</text>
<text x="0" y="0" transform="translate(525.90,405.15) scale(1,1.1)" font-size="5.3" fill="#d0d0d0" text-anchor="end" style="font-family:'Liberation Mono',monospace;font-weight:normal;white-space:pre" >0.0%</text>
<text x="0" y="0" transform="translate(539.70,405.15) scale(1,1.1)" font-size="5.3" fill="#d0d0d0" text-anchor="start" style="font-family:'Liberation Mono',monospace;font-weight:normal;white-space:pre" >Max:</text>
<text x="0" y="0" transform="translate(573.60,405.15) scale(1,1.1)" font-size="5.3" fill="#d0d0d0" text-anchor="end" style="font-family:'Liberation Mono',monospace;font-weight:normal;white-space:pre" >0.1%</text>
<rect x="352.70" y="407.40" width="5.20" height="4.60" fill="#2c8181" />
<rect x="353.40" y="408.10" width="3.80" height="3.20" fill="#50cece" />
<text x="0" y="0" transform="translate(360.30,411.50) scale(1,1.1)" font-size="5.3" fill="#d0d0d0" text-anchor="start" style="font-family:'Liberation Mono',monospace;font-weight:normal;white-space:pre" >system</text>
<text x="0" y="0" transform="translate(395.00,411.50) scale(1,1.1)" font-size="5.3" fill="#d0d0d0" text-anchor="start" style="font-family:'Liberation Mono',monospace;font-weight:normal;white-space:pre" >Cur:</text>
<text x="0" y="0" transform="translate(428.80,411.50) scale(1,1.1)" font-size="5.3" fill="#d0d0d0" text-anchor="end" style="font-family:'Liberation Mono',monospace;font-weight:normal;white-space:pre" >2.9%</text>
<text x="0" y="0" transform="translate(443.30,411.50) scale(1,1.1)" font-size="5.3" fill="#d0d0d0" text-anchor="start" style="font-family:'Liberation Mono',monospace;font-weight:normal;white-space:pre" >Avg:</text>
<text x="0" y="0" transform="translate(477.60,411.50) scale(1,1.1)" font-size="5.3" fill="#d0d0d0" text-anchor="end" style="font-family:'Liberation Mono',monospace;font-weight:normal;white-space:pre" >2.5%</text>
<text x="0" y="0" transform="translate(491.30,411.50) scale(1,1.1)" font-size="5.3" fill="#d0d0d0" text-anchor="start" style="font-family:'Liberation Mono',monospace;font-weight:normal;white-space:pre" >Min:</text>
<text x="0" y="0" transform="translate(525.90,411.50) scale(1,1.1)" font-size="5.3" fill="#d0d0d0" text-anchor="end" style="font-family:'Liberation Mono',monospace;font-weight:normal;white-space:pre" >1.7%</text>
<text x="0" y="0" transform="translate(539.70,411.50) scale(1,1.1)" font-size="5.3" fill="#d0d0d0" text-anchor="start" style="font-family:'Liberation Mono',monospace;font-weight:normal;white-space:pre" >Max:</text>
<text x="0" y="0" transform="translate(573.60,411.50) scale(1,1.1)" font-size="5.3" fill="#d0d0d0" text-anchor="end" style="font-family:'Liberation Mono',monospace;font-weight:normal;white-space:pre" >5.5%</text>
<rect x="352.70" y="413.75" width="5.20" height="4.60" fill="#812c81" />
<rect x="353.40" y="414.45" width="3.80" height="3.20" fill="#ce50ce" />
<text x="0" y="0" transform="translate(360.30,417.85) scale(1,1.1)" font-size="5.3" fill="#d0d0d0" text-anchor="start" style="font-family:'Liberation Mono',monospace;font-weight:normal;white-space:pre" >I/O wait</text>
<text x="0" y="0" transform="translate(395.00,417.85) scale(1,1.1)" font-size="5.3" fill="#d0d0d0" text-anchor="start" style="font-family:'Liberation Mono',monospace;font-weight:normal;white-space:pre" >Cur:</text>
<text x="0" y="0" transform="translate(428.80,417.85) scale(1,1.1)" font-size="5.3" fill="#d0d0d0" text-anchor="end" style="font-family:'Liberation Mono',monospace;font-weight:normal;white-space:pre" >0.1%</text>
<text x="0" y="0" transform="translate(443.30,417.85) scale(1,1.1)" font-size="5.3" fill="#d0d0d0" text-anchor="start" style="font-family:'Liberation Mono',monospace;font-weight:normal;white-space:pre" >Avg:</text>
<text x="0" y="0" transform="translate(477.60,417.85) scale(1,1.1)" font-size="5.3" fill="#d0d0d0" text-anchor="end" style="font-family:'Liberation Mono',monospace;font-weight:normal;white-space:pre" >0.1%</text>
<text x="0" y="0" transform="translate(491.30,417.85) scale(1,1.1)" font-size="5.3" fill="#d0d0d0" text-anchor="start" style="font-family:'Liberation Mono',monospace;font-weight:normal;white-space:pre" >Min:</text>
<text x="0" y="0" transform="translate(525.90,417.85) scale(1,1.1)" font-size="5.3" fill="#d0d0d0" text-anchor="end" style="font-family:'Liberation Mono',monospace;font-weight:normal;white-space:pre" >0.0%</text>
<text x="0" y="0" transform="translate(539.70,417.85) scale(1,1.1)" font-size="5.3" fill="#d0d0d0" text-anchor="start" style="font-family:'Liberation Mono',monospace;font-weight:normal;white-space:pre" >Max:</text>
<text x="0" y="0" transform="translate(573.60,417.85) scale(1,1.1)" font-size="5.3" fill="#d0d0d0" text-anchor="end" style="font-family:'Liberation Mono',monospace;font-weight:normal;white-space:pre" >1.0%</text>
<rect x="2.00" y="418.60" width="690.00" height="2.40" fill="#e2e2e2" />
<rect x="0.00" y="420.30" width="694.00" height="0.70" fill="#9a9a9a" />
</svg></body></html>
